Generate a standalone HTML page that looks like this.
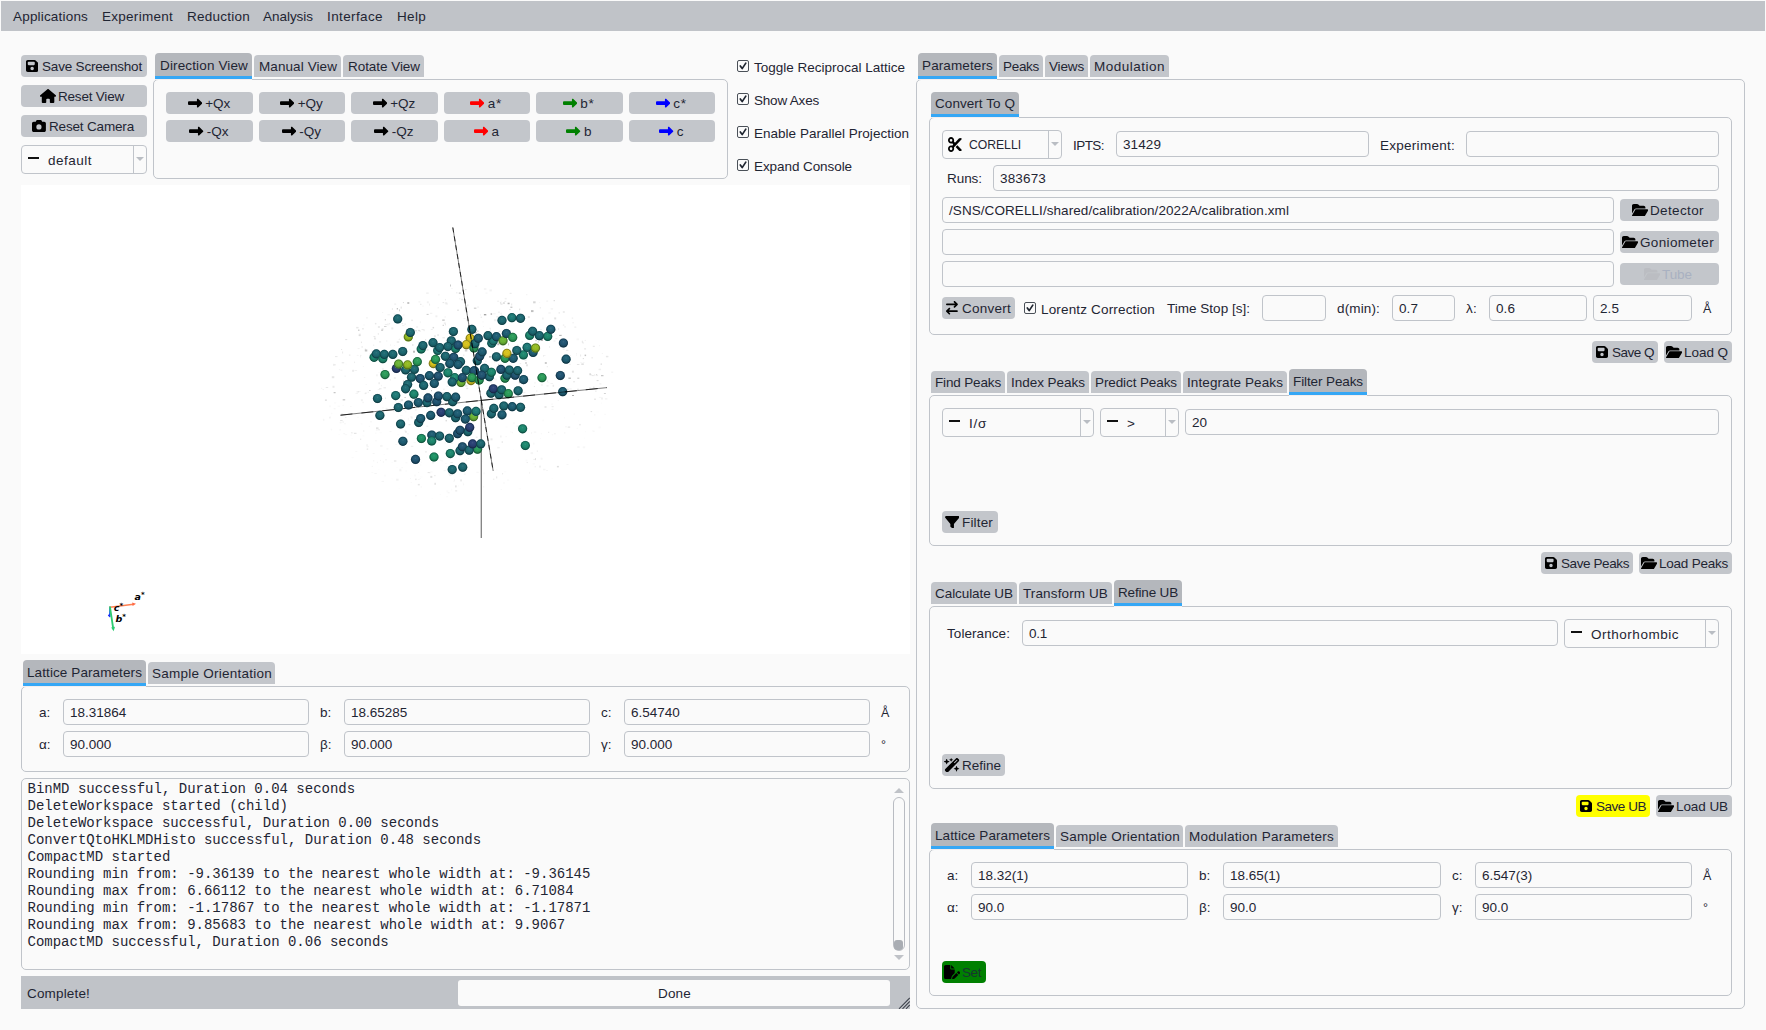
<!DOCTYPE html>
<html lang="en"><head><meta charset="utf-8"><title>Garnet</title>
<style>
html,body{margin:0;padding:0;}
body{width:1766px;height:1030px;background:#fafafa;position:relative;overflow:hidden;font-family:"Liberation Sans", sans-serif;font-size:13.5px;color:#1f2533;}
div,pre,svg.ic{position:absolute;box-sizing:content-box;}
.bar{background:#c0c3c8;}
.btn{background:#c3c6cb;border-radius:4px;}
.dbtn{box-sizing:border-box;padding-right:2px;display:flex;justify-content:center;align-items:center;white-space:nowrap;}
.dbtn svg{position:static;flex:none;}
.tab{background:#c3c6cb;border-radius:4px 4px 0 0;}
.tab.sel{background:#b4b7bc;box-shadow:inset 0 -3px 0 #35a7f5,0 1px 0 #f3eeee;}
.pane{border:1px solid #c0c4ca;border-radius:5px;background:#fafafa;}
.inp{border:1px solid #c0c4ca;border-radius:4px;background:#fafafa;}
.view{background:#fff;overflow:hidden;}
.prog{background:#fafafa;border-radius:3px;}
.t{white-space:nowrap;margin-top:1px;}
.sep{width:1px;background:#c0c4ca;}
.darr{width:0;height:0;border-left:4.4px solid transparent;border-right:4.4px solid transparent;border-top:4.4px solid #b9bdc3;}
.dash{width:11px;height:2px;background:#111;}
.cb{width:10px;height:10px;border:1px solid #4a5058;border-radius:2px;background:#fafafa;}
.cb svg{position:absolute;left:-1px;top:-1px;}
.con{margin:0;font-family:"Liberation Mono",monospace;font-size:14px;line-height:17px;color:#1f2533;}
.uarr{width:0;height:0;border-left:5px solid transparent;border-right:5px solid transparent;border-bottom:5px solid #bfc2c7;}
.darr2{width:0;height:0;border-left:5px solid transparent;border-right:5px solid transparent;border-top:5px solid #bfc2c7;}
.sbt{border:1px solid #b9bcc2;border-radius:6px;background:#fafafa;}
.sbh{width:9px;height:9.6px;border-radius:3px;background:#a9adb3;}
</style></head>
<body>
<div class="pane" style="left:153px;top:79px;width:573px;height:98px;"></div>
<div class="pane" style="left:21px;top:686px;width:887px;height:84px;"></div>
<div class="pane" style="left:21px;top:778px;width:887px;height:190px;"></div>
<div class="pane" style="left:916px;top:79px;width:827px;height:928px;"></div>
<div class="pane" style="left:929px;top:117px;width:801px;height:216px;"></div>
<div class="pane" style="left:929px;top:395px;width:801px;height:149px;"></div>
<div class="pane" style="left:929px;top:606px;width:801px;height:181px;"></div>
<div class="pane" style="left:929px;top:849px;width:801px;height:145px;"></div>
<div class="bar" style="left:1px;top:1px;width:1764px;height:30px;"></div>
<div class="t fit" style="left:13px;top:1px;height:30px;line-height:30px;letter-spacing:0.184px;">Applications</div>
<div class="t fit" style="left:102px;top:1px;height:30px;line-height:30px;letter-spacing:0.272px;">Experiment</div>
<div class="t fit" style="left:187px;top:1px;height:30px;line-height:30px;letter-spacing:0.245px;">Reduction</div>
<div class="t fit" style="left:263px;top:1px;height:30px;line-height:30px;letter-spacing:-0.035px;">Analysis</div>
<div class="t fit" style="left:327px;top:1px;height:30px;line-height:30px;letter-spacing:0.385px;">Interface</div>
<div class="t fit" style="left:397px;top:1px;height:30px;line-height:30px;letter-spacing:0.309px;">Help</div>
<div class="btn" style="left:21px;top:55px;width:126px;height:22px;"></div>
<svg class="ic" style="left:25.8px;top:60.0px;width:12.3px;height:12px" viewBox="0 32 448 448" preserveAspectRatio="none"><path fill="#000" d="M64 32C28.700 32 0 60.700 0 96V416c0 35.300 28.700 64 64 64H384c35.300 0 64-28.700 64-64V173.300c0-17-6.700-33.300-18.700-45.300L352 50.700C340 38.700 323.700 32 306.700 32H64zm0 96c0-17.700 14.300-32 32-32H288c17.700 0 32 14.300 32 32v64c0 17.700-14.300 32-32 32H96c-17.700 0-32-14.300-32-32V128zM224 288a64 64 0 1 1 0 128 64 64 0 1 1 0-128z"/></svg>
<div class="t fit" style="left:42px;top:55px;height:22px;line-height:22px;letter-spacing:-0.188px;">Save Screenshot</div>
<div class="btn" style="left:21px;top:85px;width:126px;height:22px;"></div>
<svg class="ic" style="left:39.8px;top:89.0px;width:16.1px;height:14px" viewBox="0 0 576 512" preserveAspectRatio="none"><path fill="#000" d="M575.800 255.500c0 18-15 32.100-32 32.100h-32l.7 160.200c0 2.700-.2 5.400-.5 8.100V472c0 22.100-17.900 40-40 40H456c-1.100 0-2.200 0-3.300-.1c-1.400.1-2.800.1-4.200.1H416 392c-22.100 0-40-17.900-40-40V448 384c0-17.700-14.300-32-32-32H256c-17.700 0-32 14.300-32 32v64 24c0 22.100-17.900 40-40 40H160 128.100c-1.500 0-3-.1-4.500-.2c-1.200.1-2.400.2-3.600.2H104c-22.100 0-40-17.900-40-40V360c0-.9 0-1.900.1-2.800V287.600H32c-18 0-32-14-32-32.100c0-9 3-17 10-24L266.400 8c7-7 15-8 22-8s15 2 21 7L564.800 231.500c8 7 12 15 11 24z"/></svg>
<div class="t fit" style="left:58px;top:85px;height:22px;line-height:22px;letter-spacing:-0.205px;">Reset View</div>
<div class="btn" style="left:21px;top:115px;width:126px;height:22px;"></div>
<svg class="ic" style="left:32px;top:119.95px;width:13.9px;height:12.1px" viewBox="0 32 512 448" preserveAspectRatio="none"><path fill="#000" d="M149.100 64.800L138.700 96H64C28.700 96 0 124.700 0 160V416c0 35.300 28.700 64 64 64H448c35.300 0 64-28.700 64-64V160c0-35.300-28.700-64-64-64H373.300L362.900 64.800C356.400 45.200 338.100 32 317.400 32H194.600c-20.700 0-39 13.200-45.500 32.800zM256 192a96 96 0 1 1 0 192 96 96 0 1 1 0-192z"/></svg>
<div class="t fit" style="left:49px;top:115px;height:22px;line-height:22px;letter-spacing:-0.171px;">Reset Camera</div>
<div class="inp" style="left:21px;top:145px;width:124px;height:27px;"></div>
<div class="sep" style="left:133px;top:146px;height:27px"></div>
<div class="darr" style="left:135.6px;top:156.8px"></div>
<div class="dash" style="left:28px;top:156.8px"></div>
<div class="t fit" style="left:48px;top:145px;height:29px;line-height:29px;letter-spacing:0.493px;">default</div>
<div class="tab sel" style="left:155px;top:53px;width:97px;height:26px"></div>
<div class="t fit" style="left:160px;top:53px;height:23px;line-height:23px;letter-spacing:0.140px;">Direction View</div>
<div class="tab" style="left:254px;top:55px;width:87px;height:22px"></div>
<div class="t fit" style="left:259px;top:55px;height:22px;line-height:22px;letter-spacing:0.087px;">Manual View</div>
<div class="tab" style="left:343px;top:55px;width:81px;height:22px"></div>
<div class="t fit" style="left:348px;top:55px;height:22px;line-height:22px;letter-spacing:-0.050px;">Rotate View</div>
<div class="btn dbtn" style="left:166px;top:92px;width:87px;height:22px"><svg viewBox="0 0 512 512" width="14.3" height="14.3" style="margin:0 0.85px"><path fill="#000" d="M334.5 414c8.800 3.800 19 2 26-4.600l144-136c4.800-4.500 7.500-10.800 7.500-17.400s-2.700-12.900-7.500-17.400l-144-136c-7-6.600-17.200-8.400-26-4.600s-14.500 12.500-14.500 22l0 72L32 192c-17.700 0-32 14.300-32 32l0 64c0 17.700 14.300 32 32 32l288 0 0 72c0 9.600 5.700 18.200 14.500 22z"/></svg><span class="fit" style="margin-left:2.5px;margin-top:1px;">+Qx</span></div>
<div class="btn dbtn" style="left:259px;top:92px;width:86px;height:22px"><svg viewBox="0 0 512 512" width="14.3" height="14.3" style="margin:0 0.85px"><path fill="#000" d="M334.5 414c8.800 3.800 19 2 26-4.600l144-136c4.800-4.500 7.500-10.800 7.500-17.400s-2.700-12.900-7.500-17.400l-144-136c-7-6.600-17.200-8.400-26-4.600s-14.500 12.500-14.500 22l0 72L32 192c-17.700 0-32 14.300-32 32l0 64c0 17.700 14.300 32 32 32l288 0 0 72c0 9.600 5.700 18.200 14.500 22z"/></svg><span class="fit" style="margin-left:2.5px;margin-top:1px;">+Qy</span></div>
<div class="btn dbtn" style="left:351px;top:92px;width:87px;height:22px"><svg viewBox="0 0 512 512" width="14.3" height="14.3" style="margin:0 0.85px"><path fill="#000" d="M334.5 414c8.800 3.800 19 2 26-4.600l144-136c4.800-4.500 7.500-10.800 7.500-17.400s-2.700-12.900-7.500-17.400l-144-136c-7-6.600-17.200-8.400-26-4.600s-14.500 12.500-14.500 22l0 72L32 192c-17.700 0-32 14.300-32 32l0 64c0 17.700 14.300 32 32 32l288 0 0 72c0 9.600 5.700 18.200 14.500 22z"/></svg><span class="fit" style="margin-left:2.5px;margin-top:1px;">+Qz</span></div>
<div class="btn dbtn" style="left:444px;top:92px;width:86px;height:22px"><svg viewBox="0 0 512 512" width="14.3" height="14.3" style="margin:0 0.85px"><path fill="#f00" d="M334.5 414c8.800 3.800 19 2 26-4.600l144-136c4.800-4.500 7.500-10.800 7.500-17.400s-2.700-12.900-7.500-17.400l-144-136c-7-6.600-17.200-8.400-26-4.600s-14.500 12.500-14.500 22l0 72L32 192c-17.700 0-32 14.300-32 32l0 64c0 17.700 14.300 32 32 32l288 0 0 72c0 9.600 5.700 18.200 14.500 22z"/></svg><span class="fit" style="margin-left:2.5px;margin-top:1px;letter-spacing:0.8px;margin-right:0.6px;">a*</span></div>
<div class="btn dbtn" style="left:536px;top:92px;width:87px;height:22px"><svg viewBox="0 0 512 512" width="14.3" height="14.3" style="margin:0 0.85px"><path fill="#008000" d="M334.5 414c8.800 3.800 19 2 26-4.600l144-136c4.800-4.500 7.500-10.800 7.500-17.400s-2.700-12.900-7.500-17.400l-144-136c-7-6.600-17.200-8.400-26-4.600s-14.500 12.500-14.500 22l0 72L32 192c-17.700 0-32 14.300-32 32l0 64c0 17.700 14.300 32 32 32l288 0 0 72c0 9.600 5.700 18.200 14.500 22z"/></svg><span class="fit" style="margin-left:2.5px;margin-top:1px;letter-spacing:0.8px;margin-right:0.6px;">b*</span></div>
<div class="btn dbtn" style="left:629px;top:92px;width:86px;height:22px"><svg viewBox="0 0 512 512" width="14.3" height="14.3" style="margin:0 0.85px"><path fill="#00f" d="M334.5 414c8.800 3.800 19 2 26-4.600l144-136c4.800-4.500 7.500-10.800 7.500-17.400s-2.700-12.900-7.500-17.400l-144-136c-7-6.600-17.200-8.400-26-4.600s-14.500 12.500-14.500 22l0 72L32 192c-17.700 0-32 14.300-32 32l0 64c0 17.700 14.300 32 32 32l288 0 0 72c0 9.600 5.700 18.200 14.500 22z"/></svg><span class="fit" style="margin-left:2.5px;margin-top:1px;letter-spacing:0.8px;margin-right:0.6px;">c*</span></div>
<div class="btn dbtn" style="left:166px;top:120px;width:87px;height:22px"><svg viewBox="0 0 512 512" width="14.3" height="14.3" style="margin:0 0.85px"><path fill="#000" d="M334.5 414c8.800 3.800 19 2 26-4.600l144-136c4.800-4.500 7.500-10.800 7.500-17.400s-2.700-12.900-7.500-17.400l-144-136c-7-6.600-17.200-8.400-26-4.600s-14.500 12.500-14.500 22l0 72L32 192c-17.700 0-32 14.300-32 32l0 64c0 17.700 14.300 32 32 32l288 0 0 72c0 9.600 5.700 18.200 14.500 22z"/></svg><span class="fit" style="margin-left:2.5px;margin-top:1px;">-Qx</span></div>
<div class="btn dbtn" style="left:259px;top:120px;width:86px;height:22px"><svg viewBox="0 0 512 512" width="14.3" height="14.3" style="margin:0 0.85px"><path fill="#000" d="M334.5 414c8.800 3.800 19 2 26-4.600l144-136c4.800-4.500 7.500-10.800 7.500-17.400s-2.700-12.900-7.500-17.400l-144-136c-7-6.600-17.200-8.400-26-4.600s-14.500 12.500-14.500 22l0 72L32 192c-17.700 0-32 14.300-32 32l0 64c0 17.700 14.300 32 32 32l288 0 0 72c0 9.600 5.700 18.200 14.500 22z"/></svg><span class="fit" style="margin-left:2.5px;margin-top:1px;">-Qy</span></div>
<div class="btn dbtn" style="left:351px;top:120px;width:87px;height:22px"><svg viewBox="0 0 512 512" width="14.3" height="14.3" style="margin:0 0.85px"><path fill="#000" d="M334.5 414c8.800 3.800 19 2 26-4.600l144-136c4.800-4.500 7.500-10.800 7.500-17.400s-2.700-12.900-7.500-17.400l-144-136c-7-6.600-17.200-8.400-26-4.600s-14.500 12.500-14.500 22l0 72L32 192c-17.700 0-32 14.300-32 32l0 64c0 17.700 14.300 32 32 32l288 0 0 72c0 9.600 5.700 18.200 14.500 22z"/></svg><span class="fit" style="margin-left:2.5px;margin-top:1px;">-Qz</span></div>
<div class="btn dbtn" style="left:444px;top:120px;width:86px;height:22px"><svg viewBox="0 0 512 512" width="14.3" height="14.3" style="margin:0 0.85px"><path fill="#f00" d="M334.5 414c8.800 3.800 19 2 26-4.600l144-136c4.800-4.500 7.500-10.800 7.500-17.400s-2.700-12.900-7.500-17.400l-144-136c-7-6.600-17.200-8.400-26-4.600s-14.500 12.500-14.500 22l0 72L32 192c-17.700 0-32 14.300-32 32l0 64c0 17.700 14.300 32 32 32l288 0 0 72c0 9.600 5.700 18.200 14.500 22z"/></svg><span class="fit" style="margin-left:2.5px;margin-top:1px;">a</span></div>
<div class="btn dbtn" style="left:536px;top:120px;width:87px;height:22px"><svg viewBox="0 0 512 512" width="14.3" height="14.3" style="margin:0 0.85px"><path fill="#008000" d="M334.5 414c8.800 3.800 19 2 26-4.600l144-136c4.800-4.500 7.500-10.800 7.500-17.400s-2.700-12.900-7.500-17.400l-144-136c-7-6.600-17.200-8.400-26-4.600s-14.500 12.500-14.500 22l0 72L32 192c-17.700 0-32 14.300-32 32l0 64c0 17.700 14.300 32 32 32l288 0 0 72c0 9.600 5.700 18.200 14.500 22z"/></svg><span class="fit" style="margin-left:2.5px;margin-top:1px;">b</span></div>
<div class="btn dbtn" style="left:629px;top:120px;width:86px;height:22px"><svg viewBox="0 0 512 512" width="14.3" height="14.3" style="margin:0 0.85px"><path fill="#00f" d="M334.5 414c8.800 3.800 19 2 26-4.600l144-136c4.800-4.500 7.500-10.800 7.500-17.400s-2.700-12.900-7.500-17.400l-144-136c-7-6.600-17.200-8.400-26-4.600s-14.500 12.500-14.500 22l0 72L32 192c-17.700 0-32 14.300-32 32l0 64c0 17.700 14.300 32 32 32l288 0 0 72c0 9.600 5.700 18.200 14.500 22z"/></svg><span class="fit" style="margin-left:2.5px;margin-top:1px;">c</span></div>
<div class="cb" style="left:737px;top:60px"><svg viewBox="0 0 12 12" width="12" height="12"><path d="M3.3 5.9 L5.2 8.6 L8.8 3.1" fill="none" stroke="#1f2530" stroke-width="1.7" stroke-linecap="round" stroke-linejoin="round"/></svg></div>
<div class="t fit" style="left:754px;top:56px;height:22px;line-height:22px;letter-spacing:0.006px;">Toggle Reciprocal Lattice</div>
<div class="cb" style="left:737px;top:93px"><svg viewBox="0 0 12 12" width="12" height="12"><path d="M3.3 5.9 L5.2 8.6 L8.8 3.1" fill="none" stroke="#1f2530" stroke-width="1.7" stroke-linecap="round" stroke-linejoin="round"/></svg></div>
<div class="t fit" style="left:754px;top:89px;height:22px;line-height:22px;letter-spacing:-0.200px;">Show Axes</div>
<div class="cb" style="left:737px;top:126px"><svg viewBox="0 0 12 12" width="12" height="12"><path d="M3.3 5.9 L5.2 8.6 L8.8 3.1" fill="none" stroke="#1f2530" stroke-width="1.7" stroke-linecap="round" stroke-linejoin="round"/></svg></div>
<div class="t fit" style="left:754px;top:122px;height:22px;line-height:22px;letter-spacing:0.016px;">Enable Parallel Projection</div>
<div class="cb" style="left:737px;top:159px"><svg viewBox="0 0 12 12" width="12" height="12"><path d="M3.3 5.9 L5.2 8.6 L8.8 3.1" fill="none" stroke="#1f2530" stroke-width="1.7" stroke-linecap="round" stroke-linejoin="round"/></svg></div>
<div class="t fit" style="left:754px;top:155px;height:22px;line-height:22px;letter-spacing:-0.077px;">Expand Console</div>
<div class="view" style="left:21px;top:185px;width:889px;height:469px;"><svg viewBox="21 185 889 469" width="889" height="469" style="position:absolute;left:0;top:0"><defs><radialGradient id="sh" cx="0.5" cy="0.36" r="0.7"><stop offset="0" stop-color="#fff" stop-opacity="0.10"/><stop offset="0.4" stop-color="#000" stop-opacity="0"/><stop offset="0.78" stop-color="#000" stop-opacity="0.22"/><stop offset="1" stop-color="#000" stop-opacity="0.5"/></radialGradient></defs><g><rect x="435.5" y="436.8" width="2" height="1" fill="#000" fill-opacity="0.02"/><rect x="426.8" y="392.7" width="1" height="2" fill="#000" fill-opacity="0.10"/><rect x="516.5" y="425.6" width="2" height="1" fill="#000" fill-opacity="0.07"/><rect x="521.4" y="340.8" width="1.5" height="2" fill="#000" fill-opacity="0.04"/><rect x="359.9" y="355.5" width="1" height="2" fill="#000" fill-opacity="0.05"/><rect x="421.6" y="329.1" width="2" height="1" fill="#000" fill-opacity="0.09"/><rect x="437.3" y="334.3" width="1.5" height="1.5" fill="#000" fill-opacity="0.11"/><rect x="539.9" y="437.9" width="1" height="1" fill="#000" fill-opacity="0.03"/><rect x="528.0" y="338.7" width="2" height="1.5" fill="#000" fill-opacity="0.04"/><rect x="455.1" y="485.4" width="1.5" height="2" fill="#000" fill-opacity="0.12"/><rect x="444.8" y="463.0" width="2" height="1" fill="#000" fill-opacity="0.02"/><rect x="498.2" y="363.9" width="1" height="1.5" fill="#000" fill-opacity="0.18"/><rect x="390.4" y="425.7" width="1" height="1" fill="#000" fill-opacity="0.02"/><rect x="376.0" y="427.3" width="2.5" height="2" fill="#000" fill-opacity="0.11"/><rect x="464.4" y="309.4" width="2.5" height="2" fill="#000" fill-opacity="0.06"/><rect x="548.2" y="431.8" width="1" height="1" fill="#000" fill-opacity="0.11"/><rect x="398.7" y="402.5" width="2" height="1.5" fill="#000" fill-opacity="0.02"/><rect x="461.2" y="298.8" width="2" height="1" fill="#000" fill-opacity="0.11"/><rect x="391.3" y="462.2" width="1.5" height="1" fill="#000" fill-opacity="0.02"/><rect x="420.1" y="428.7" width="2" height="1" fill="#000" fill-opacity="0.04"/><rect x="497.1" y="300.7" width="2" height="1" fill="#000" fill-opacity="0.07"/><rect x="450.0" y="284.5" width="1" height="2" fill="#000" fill-opacity="0.21"/><rect x="599.1" y="345.2" width="1" height="1" fill="#000" fill-opacity="0.05"/><rect x="503.9" y="471.3" width="2.5" height="1" fill="#000" fill-opacity="0.02"/><rect x="394.2" y="303.6" width="2" height="1" fill="#000" fill-opacity="0.08"/><rect x="584.2" y="437.7" width="1" height="1" fill="#000" fill-opacity="0.02"/><rect x="546.0" y="470.0" width="2" height="1" fill="#000" fill-opacity="0.03"/><rect x="594.5" y="398.5" width="1" height="1.5" fill="#000" fill-opacity="0.17"/><rect x="490.7" y="376.4" width="2" height="1" fill="#000" fill-opacity="0.06"/><rect x="556.9" y="465.9" width="2" height="1.5" fill="#000" fill-opacity="0.13"/><rect x="505.4" y="426.5" width="2" height="1" fill="#000" fill-opacity="0.02"/><rect x="540.6" y="457.7" width="2" height="2" fill="#000" fill-opacity="0.04"/><rect x="499.8" y="368.9" width="1" height="2" fill="#000" fill-opacity="0.03"/><rect x="499.3" y="376.1" width="2" height="2" fill="#000" fill-opacity="0.05"/><rect x="333.6" y="392.2" width="2" height="1" fill="#000" fill-opacity="0.28"/><rect x="418.5" y="329.9" width="1" height="1" fill="#000" fill-opacity="0.24"/><rect x="413.5" y="442.2" width="2.5" height="1" fill="#000" fill-opacity="0.03"/><rect x="599.4" y="383.1" width="2" height="1.5" fill="#000" fill-opacity="0.05"/><rect x="417.8" y="479.0" width="2" height="1" fill="#000" fill-opacity="0.03"/><rect x="431.7" y="497.8" width="1" height="1" fill="#000" fill-opacity="0.02"/><rect x="525.8" y="354.2" width="2.5" height="1" fill="#000" fill-opacity="0.07"/><rect x="358.2" y="391.0" width="2.5" height="1" fill="#000" fill-opacity="0.04"/><rect x="576.0" y="353.0" width="1" height="1" fill="#000" fill-opacity="0.04"/><rect x="601.5" y="397.5" width="1" height="2" fill="#000" fill-opacity="0.11"/><rect x="550.5" y="383.0" width="2.5" height="1" fill="#000" fill-opacity="0.05"/><rect x="351.2" y="432.2" width="1.5" height="1" fill="#000" fill-opacity="0.04"/><rect x="389.8" y="379.0" width="1" height="1.5" fill="#000" fill-opacity="0.07"/><rect x="572.6" y="322.3" width="1" height="1" fill="#000" fill-opacity="0.10"/><rect x="465.9" y="343.6" width="1" height="1" fill="#000" fill-opacity="0.09"/><rect x="468.5" y="446.1" width="2.5" height="1" fill="#000" fill-opacity="0.04"/><rect x="398.5" y="488.1" width="1.5" height="1" fill="#000" fill-opacity="0.01"/><rect x="386.4" y="448.4" width="2" height="1" fill="#000" fill-opacity="0.04"/><rect x="535.0" y="458.1" width="1" height="2" fill="#000" fill-opacity="0.12"/><rect x="543.0" y="468.8" width="2.5" height="1.5" fill="#000" fill-opacity="0.04"/><rect x="444.0" y="363.7" width="2.5" height="1.5" fill="#000" fill-opacity="0.09"/><rect x="530.6" y="452.1" width="2.5" height="2" fill="#000" fill-opacity="0.04"/><rect x="581.3" y="363.6" width="2.5" height="1" fill="#000" fill-opacity="0.20"/><rect x="428.6" y="403.6" width="1" height="1.5" fill="#000" fill-opacity="0.03"/><rect x="592.0" y="430.1" width="2.5" height="1.5" fill="#000" fill-opacity="0.02"/><rect x="455.2" y="490.1" width="2" height="1.5" fill="#000" fill-opacity="0.07"/><rect x="543.0" y="355.8" width="1" height="1" fill="#000" fill-opacity="0.06"/><rect x="393.7" y="319.2" width="2" height="1" fill="#000" fill-opacity="0.11"/><rect x="345.0" y="417.0" width="1.5" height="1" fill="#000" fill-opacity="0.06"/><rect x="342.4" y="421.3" width="1.5" height="1.5" fill="#000" fill-opacity="0.05"/><rect x="496.2" y="476.4" width="1" height="2" fill="#000" fill-opacity="0.10"/><rect x="560.2" y="334.5" width="2" height="1.5" fill="#000" fill-opacity="0.03"/><rect x="362.4" y="401.7" width="1.5" height="1.5" fill="#000" fill-opacity="0.04"/><rect x="593.4" y="386.7" width="1" height="1" fill="#000" fill-opacity="0.19"/><rect x="402.1" y="447.0" width="1.5" height="1.5" fill="#000" fill-opacity="0.04"/><rect x="455.5" y="420.6" width="1" height="1" fill="#000" fill-opacity="0.09"/><rect x="415.4" y="478.6" width="1" height="1.5" fill="#000" fill-opacity="0.13"/><rect x="352.1" y="369.8" width="2" height="2" fill="#000" fill-opacity="0.08"/><rect x="457.8" y="422.5" width="2" height="1.5" fill="#000" fill-opacity="0.02"/><rect x="456.0" y="292.0" width="1.5" height="1.5" fill="#000" fill-opacity="0.06"/><rect x="501.7" y="441.3" width="1" height="1.5" fill="#000" fill-opacity="0.13"/><rect x="405.0" y="410.6" width="1.5" height="2" fill="#000" fill-opacity="0.02"/><rect x="463.8" y="473.4" width="2" height="1.5" fill="#000" fill-opacity="0.03"/><rect x="402.4" y="443.5" width="1.5" height="1" fill="#000" fill-opacity="0.03"/><rect x="504.7" y="297.9" width="2" height="1.5" fill="#000" fill-opacity="0.06"/><rect x="417.8" y="483.9" width="2" height="1.5" fill="#000" fill-opacity="0.10"/><rect x="592.9" y="431.0" width="2" height="1" fill="#000" fill-opacity="0.02"/><rect x="551.4" y="477.7" width="2" height="1" fill="#000" fill-opacity="0.01"/><rect x="485.8" y="331.2" width="1.5" height="1" fill="#000" fill-opacity="0.07"/><rect x="350.3" y="434.6" width="2" height="1" fill="#000" fill-opacity="0.02"/><rect x="446.5" y="385.8" width="1.5" height="1" fill="#000" fill-opacity="0.05"/><rect x="342.7" y="399.0" width="2.5" height="1.5" fill="#000" fill-opacity="0.18"/><rect x="500.6" y="300.7" width="1" height="1" fill="#000" fill-opacity="0.05"/><rect x="385.6" y="407.8" width="2" height="1.5" fill="#000" fill-opacity="0.05"/><rect x="333.6" y="408.3" width="2" height="1" fill="#000" fill-opacity="0.05"/><rect x="496.1" y="417.2" width="1.5" height="1" fill="#000" fill-opacity="0.13"/><rect x="436.0" y="438.7" width="1" height="1" fill="#000" fill-opacity="0.03"/><rect x="402.0" y="443.3" width="1.5" height="1" fill="#000" fill-opacity="0.05"/><rect x="566.5" y="464.0" width="2" height="1" fill="#000" fill-opacity="0.03"/><rect x="371.3" y="472.0" width="2" height="1" fill="#000" fill-opacity="0.02"/><rect x="393.9" y="344.9" width="1" height="1" fill="#000" fill-opacity="0.04"/><rect x="387.6" y="358.0" width="1" height="1" fill="#000" fill-opacity="0.09"/><rect x="543.0" y="355.0" width="2.5" height="1" fill="#000" fill-opacity="0.05"/><rect x="331.0" y="412.7" width="1.5" height="1.5" fill="#000" fill-opacity="0.02"/><rect x="447.0" y="392.0" width="2.5" height="1" fill="#000" fill-opacity="0.06"/><rect x="426.2" y="456.4" width="1" height="1.5" fill="#000" fill-opacity="0.02"/><rect x="497.1" y="400.7" width="1" height="1" fill="#000" fill-opacity="0.02"/><rect x="362.1" y="435.4" width="2.5" height="1" fill="#000" fill-opacity="0.02"/><rect x="450.5" y="456.4" width="2" height="1" fill="#000" fill-opacity="0.02"/><rect x="439.7" y="494.1" width="1.5" height="1" fill="#000" fill-opacity="0.02"/><rect x="510.4" y="306.7" width="2" height="1" fill="#000" fill-opacity="0.29"/><rect x="551.6" y="406.2" width="2" height="1" fill="#000" fill-opacity="0.09"/><rect x="534.4" y="337.1" width="1" height="1" fill="#000" fill-opacity="0.09"/><rect x="443.1" y="416.8" width="1.5" height="1" fill="#000" fill-opacity="0.04"/><rect x="438.5" y="441.3" width="1" height="1.5" fill="#000" fill-opacity="0.03"/><rect x="354.6" y="370.0" width="2.5" height="1" fill="#000" fill-opacity="0.05"/><rect x="415.2" y="494.9" width="1.5" height="1.5" fill="#000" fill-opacity="0.04"/><rect x="562.3" y="391.2" width="1" height="1" fill="#000" fill-opacity="0.04"/><rect x="504.5" y="415.6" width="1" height="1" fill="#000" fill-opacity="0.02"/><rect x="493.9" y="319.2" width="2.5" height="2" fill="#000" fill-opacity="0.06"/><rect x="505.6" y="436.2" width="1" height="1" fill="#000" fill-opacity="0.05"/><rect x="577.3" y="377.7" width="2" height="1" fill="#000" fill-opacity="0.24"/><rect x="497.3" y="343.2" width="2" height="2" fill="#000" fill-opacity="0.27"/><rect x="354.1" y="361.6" width="1" height="1.5" fill="#000" fill-opacity="0.07"/><rect x="400.8" y="349.2" width="2" height="1.5" fill="#000" fill-opacity="0.07"/><rect x="434.2" y="399.8" width="1" height="1.5" fill="#000" fill-opacity="0.09"/><rect x="395.6" y="408.9" width="1" height="1" fill="#000" fill-opacity="0.02"/><rect x="368.8" y="425.8" width="1" height="1" fill="#000" fill-opacity="0.03"/><rect x="553.7" y="300.2" width="1" height="1" fill="#000" fill-opacity="0.22"/><rect x="600.7" y="363.6" width="1" height="1" fill="#000" fill-opacity="0.24"/><rect x="459.8" y="455.5" width="2" height="1" fill="#000" fill-opacity="0.05"/><rect x="350.1" y="405.9" width="1.5" height="1" fill="#000" fill-opacity="0.03"/><rect x="409.0" y="348.8" width="1.5" height="1" fill="#000" fill-opacity="0.03"/><rect x="550.6" y="308.4" width="2.5" height="1" fill="#000" fill-opacity="0.07"/><rect x="542.1" y="317.5" width="1.5" height="2" fill="#000" fill-opacity="0.06"/><rect x="383.5" y="387.3" width="2.5" height="1" fill="#000" fill-opacity="0.09"/><rect x="381.9" y="367.9" width="2" height="2" fill="#000" fill-opacity="0.04"/><rect x="378.4" y="469.2" width="1" height="1" fill="#000" fill-opacity="0.02"/><rect x="539.5" y="465.6" width="1" height="2" fill="#000" fill-opacity="0.11"/><rect x="360.4" y="354.9" width="1" height="1" fill="#000" fill-opacity="0.07"/><rect x="404.5" y="429.6" width="1" height="2" fill="#000" fill-opacity="0.05"/><rect x="509.9" y="431.4" width="2" height="1" fill="#000" fill-opacity="0.02"/><rect x="365.9" y="317.4" width="2" height="1" fill="#000" fill-opacity="0.06"/><rect x="509.1" y="368.5" width="1" height="1" fill="#000" fill-opacity="0.03"/><rect x="399.3" y="470.4" width="2.5" height="1" fill="#000" fill-opacity="0.03"/><rect x="344.8" y="434.2" width="2.5" height="1" fill="#000" fill-opacity="0.03"/><rect x="526.0" y="364.3" width="2" height="2" fill="#000" fill-opacity="0.10"/><rect x="418.4" y="301.4" width="2" height="1" fill="#000" fill-opacity="0.06"/><rect x="369.2" y="353.5" width="1" height="1" fill="#000" fill-opacity="0.04"/><rect x="589.5" y="374.4" width="2.5" height="1" fill="#000" fill-opacity="0.09"/><rect x="567.7" y="426.6" width="2.5" height="1" fill="#000" fill-opacity="0.12"/><rect x="442.7" y="324.8" width="1" height="1" fill="#000" fill-opacity="0.29"/><rect x="467.3" y="347.7" width="2" height="1" fill="#000" fill-opacity="0.09"/><rect x="412.0" y="344.5" width="1.5" height="1" fill="#000" fill-opacity="0.15"/><rect x="475.0" y="285.7" width="2" height="1" fill="#000" fill-opacity="0.03"/><rect x="379.4" y="432.3" width="2.5" height="1" fill="#000" fill-opacity="0.02"/><rect x="502.0" y="358.0" width="1" height="2" fill="#000" fill-opacity="0.09"/><rect x="478.5" y="390.0" width="1" height="1.5" fill="#000" fill-opacity="0.11"/><rect x="355.5" y="393.0" width="2.5" height="1" fill="#000" fill-opacity="0.04"/><rect x="433.1" y="359.5" width="1" height="1" fill="#000" fill-opacity="0.06"/><rect x="364.5" y="461.5" width="1" height="1" fill="#000" fill-opacity="0.02"/><rect x="549.1" y="346.2" width="1" height="1.5" fill="#000" fill-opacity="0.08"/><rect x="426.6" y="313.9" width="2" height="1" fill="#000" fill-opacity="0.21"/><rect x="376.2" y="374.3" width="1.5" height="2" fill="#000" fill-opacity="0.06"/><rect x="386.9" y="323.4" width="2.5" height="2" fill="#000" fill-opacity="0.04"/><rect x="465.6" y="459.5" width="1.5" height="1" fill="#000" fill-opacity="0.05"/><rect x="533.9" y="386.0" width="1" height="1" fill="#000" fill-opacity="0.09"/><rect x="397.2" y="415.6" width="1" height="1.5" fill="#000" fill-opacity="0.01"/><rect x="529.6" y="337.5" width="1.5" height="1.5" fill="#000" fill-opacity="0.05"/><rect x="465.0" y="384.7" width="2.5" height="2" fill="#000" fill-opacity="0.08"/><rect x="531.0" y="310.1" width="2.5" height="2" fill="#000" fill-opacity="0.25"/><rect x="399.2" y="338.5" width="1" height="1.5" fill="#000" fill-opacity="0.06"/><rect x="452.3" y="340.7" width="1" height="2" fill="#000" fill-opacity="0.22"/><rect x="396.8" y="308.0" width="1" height="1.5" fill="#000" fill-opacity="0.29"/><rect x="531.1" y="431.9" width="1" height="2" fill="#000" fill-opacity="0.04"/><rect x="392.9" y="410.1" width="1.5" height="2" fill="#000" fill-opacity="0.04"/><rect x="331.2" y="428.9" width="1" height="2" fill="#000" fill-opacity="0.02"/><rect x="454.1" y="465.3" width="2" height="1" fill="#000" fill-opacity="0.02"/><rect x="441.2" y="460.1" width="2" height="1.5" fill="#000" fill-opacity="0.02"/><rect x="485.5" y="292.6" width="2" height="1" fill="#000" fill-opacity="0.04"/><rect x="400.5" y="306.6" width="1.5" height="2" fill="#000" fill-opacity="0.09"/><rect x="340.1" y="420.1" width="2.5" height="1" fill="#000" fill-opacity="0.11"/><rect x="337.5" y="405.7" width="2.5" height="1" fill="#000" fill-opacity="0.03"/><rect x="429.5" y="364.7" width="1.5" height="1.5" fill="#000" fill-opacity="0.10"/><rect x="576.5" y="338.3" width="2.5" height="2" fill="#000" fill-opacity="0.03"/><rect x="580.5" y="362.1" width="1" height="1" fill="#000" fill-opacity="0.07"/><rect x="479.5" y="338.3" width="2" height="2" fill="#000" fill-opacity="0.15"/><rect x="555.4" y="338.2" width="2" height="1" fill="#000" fill-opacity="0.09"/><rect x="338.6" y="434.2" width="1" height="1" fill="#000" fill-opacity="0.03"/><rect x="329.5" y="405.3" width="1" height="2" fill="#000" fill-opacity="0.04"/><rect x="371.9" y="411.8" width="1" height="1" fill="#000" fill-opacity="0.01"/><rect x="374.4" y="336.7" width="1" height="2" fill="#000" fill-opacity="0.09"/><rect x="416.7" y="332.2" width="1" height="1" fill="#000" fill-opacity="0.06"/><rect x="340.4" y="369.7" width="2" height="1" fill="#000" fill-opacity="0.05"/><rect x="322.5" y="389.1" width="1.5" height="1" fill="#000" fill-opacity="0.05"/><rect x="364.8" y="349.5" width="2.5" height="2" fill="#000" fill-opacity="0.23"/><rect x="551.5" y="408.8" width="2" height="1" fill="#000" fill-opacity="0.05"/><rect x="373.4" y="336.0" width="2" height="1" fill="#000" fill-opacity="0.08"/><rect x="344.5" y="422.9" width="1" height="1.5" fill="#000" fill-opacity="0.05"/><rect x="415.1" y="330.3" width="2" height="1" fill="#000" fill-opacity="0.17"/><rect x="491.6" y="394.1" width="2" height="2" fill="#000" fill-opacity="0.10"/><rect x="479.9" y="314.4" width="1" height="1" fill="#000" fill-opacity="0.08"/><rect x="589.0" y="387.5" width="2" height="1" fill="#000" fill-opacity="0.07"/><rect x="559.1" y="334.9" width="2.5" height="1" fill="#000" fill-opacity="0.28"/><rect x="475.7" y="436.7" width="2" height="1" fill="#000" fill-opacity="0.09"/><rect x="467.0" y="304.3" width="1.5" height="2" fill="#000" fill-opacity="0.07"/><rect x="545.4" y="362.5" width="1" height="1" fill="#000" fill-opacity="0.08"/><rect x="485.4" y="360.6" width="1" height="1.5" fill="#000" fill-opacity="0.06"/><rect x="582.8" y="358.1" width="1" height="1" fill="#000" fill-opacity="0.17"/><rect x="500.4" y="312.7" width="1.5" height="2" fill="#000" fill-opacity="0.05"/><rect x="381.1" y="329.7" width="2" height="1" fill="#000" fill-opacity="0.24"/><rect x="431.8" y="461.9" width="2.5" height="1.5" fill="#000" fill-opacity="0.05"/><rect x="498.6" y="330.8" width="2" height="1" fill="#000" fill-opacity="0.10"/><rect x="499.2" y="366.5" width="2" height="1" fill="#000" fill-opacity="0.10"/><rect x="511.2" y="303.5" width="1" height="2" fill="#000" fill-opacity="0.09"/><rect x="506.8" y="479.4" width="2.5" height="1.5" fill="#000" fill-opacity="0.02"/><rect x="463.1" y="483.4" width="1" height="2" fill="#000" fill-opacity="0.04"/><rect x="483.2" y="472.3" width="2" height="2" fill="#000" fill-opacity="0.02"/><rect x="490.5" y="438.3" width="2" height="2" fill="#000" fill-opacity="0.08"/><rect x="562.6" y="348.7" width="2" height="1" fill="#000" fill-opacity="0.08"/><rect x="405.4" y="462.0" width="2" height="1.5" fill="#000" fill-opacity="0.02"/><rect x="544.8" y="362.0" width="2" height="2" fill="#000" fill-opacity="0.18"/><rect x="333.3" y="363.8" width="1" height="2" fill="#000" fill-opacity="0.10"/><rect x="450.4" y="355.7" width="1" height="2" fill="#000" fill-opacity="0.07"/><rect x="467.9" y="458.0" width="1" height="1" fill="#000" fill-opacity="0.04"/><rect x="382.2" y="312.0" width="1" height="1" fill="#000" fill-opacity="0.05"/><rect x="361.4" y="346.2" width="1.5" height="1.5" fill="#000" fill-opacity="0.07"/><rect x="457.6" y="339.9" width="1" height="1" fill="#000" fill-opacity="0.28"/><rect x="514.2" y="359.5" width="2" height="1" fill="#000" fill-opacity="0.07"/><rect x="391.6" y="478.4" width="1" height="1" fill="#000" fill-opacity="0.02"/><rect x="444.4" y="316.2" width="1.5" height="1.5" fill="#000" fill-opacity="0.04"/><rect x="447.6" y="492.3" width="2" height="1" fill="#000" fill-opacity="0.05"/><rect x="578.1" y="458.8" width="1" height="2" fill="#000" fill-opacity="0.02"/><rect x="456.3" y="455.1" width="1" height="1" fill="#000" fill-opacity="0.02"/><rect x="501.6" y="367.6" width="2.5" height="1" fill="#000" fill-opacity="0.07"/><rect x="365.5" y="383.9" width="1.5" height="1" fill="#000" fill-opacity="0.03"/><rect x="397.0" y="434.3" width="2" height="1" fill="#000" fill-opacity="0.02"/><rect x="496.4" y="469.3" width="1" height="1" fill="#000" fill-opacity="0.04"/><rect x="366.7" y="448.6" width="1.5" height="1" fill="#000" fill-opacity="0.13"/><rect x="442.1" y="392.0" width="2.5" height="1" fill="#000" fill-opacity="0.08"/><rect x="502.5" y="384.3" width="1" height="1" fill="#000" fill-opacity="0.07"/><rect x="404.1" y="384.6" width="1.5" height="1.5" fill="#000" fill-opacity="0.10"/><rect x="450.6" y="431.4" width="1" height="2" fill="#000" fill-opacity="0.02"/><rect x="341.7" y="362.3" width="2.5" height="1" fill="#000" fill-opacity="0.10"/><rect x="398.1" y="338.9" width="1.5" height="1" fill="#000" fill-opacity="0.03"/><rect x="407.8" y="417.8" width="1" height="2" fill="#000" fill-opacity="0.03"/><rect x="490.2" y="380.7" width="2" height="2" fill="#000" fill-opacity="0.06"/><rect x="584.6" y="354.6" width="1.5" height="1.5" fill="#000" fill-opacity="0.23"/><rect x="552.6" y="384.8" width="1.5" height="2" fill="#000" fill-opacity="0.08"/><rect x="384.5" y="474.7" width="1" height="2" fill="#000" fill-opacity="0.03"/><rect x="577.5" y="388.8" width="1" height="1" fill="#000" fill-opacity="0.24"/><rect x="564.5" y="340.9" width="1" height="2" fill="#000" fill-opacity="0.04"/><rect x="495.6" y="419.0" width="1" height="1.5" fill="#000" fill-opacity="0.05"/><rect x="370.0" y="421.3" width="2" height="1" fill="#000" fill-opacity="0.04"/><rect x="456.4" y="329.5" width="1" height="1.5" fill="#000" fill-opacity="0.09"/><rect x="355.2" y="414.5" width="1.5" height="1" fill="#000" fill-opacity="0.02"/><rect x="369.1" y="390.0" width="1.5" height="1" fill="#000" fill-opacity="0.18"/><rect x="363.9" y="377.0" width="1.5" height="1" fill="#000" fill-opacity="0.04"/><rect x="350.9" y="432.5" width="2.5" height="1" fill="#000" fill-opacity="0.04"/><rect x="511.8" y="431.8" width="1" height="1.5" fill="#000" fill-opacity="0.04"/><rect x="381.6" y="328.1" width="2" height="2" fill="#000" fill-opacity="0.07"/><rect x="571.9" y="370.7" width="2" height="2" fill="#000" fill-opacity="0.10"/><rect x="433.9" y="335.2" width="2" height="2" fill="#000" fill-opacity="0.08"/><rect x="595.1" y="390.7" width="1.5" height="1" fill="#000" fill-opacity="0.09"/><rect x="378.3" y="429.3" width="1.5" height="1" fill="#000" fill-opacity="0.11"/><rect x="476.4" y="458.1" width="1" height="1" fill="#000" fill-opacity="0.05"/><rect x="430.3" y="475.9" width="2" height="2" fill="#000" fill-opacity="0.12"/><rect x="375.8" y="429.9" width="2" height="1" fill="#000" fill-opacity="0.03"/><rect x="540.8" y="432.9" width="1" height="1.5" fill="#000" fill-opacity="0.03"/><rect x="363.5" y="324.5" width="1" height="1" fill="#000" fill-opacity="0.06"/><rect x="381.5" y="480.9" width="2.5" height="1" fill="#000" fill-opacity="0.04"/><rect x="500.7" y="488.9" width="1" height="1" fill="#000" fill-opacity="0.04"/><rect x="445.4" y="302.7" width="2.5" height="2" fill="#000" fill-opacity="0.05"/><rect x="527.8" y="316.1" width="2" height="2" fill="#000" fill-opacity="0.10"/><rect x="553.5" y="340.5" width="2" height="1" fill="#000" fill-opacity="0.07"/><rect x="438.1" y="394.9" width="2" height="1.5" fill="#000" fill-opacity="0.09"/><rect x="489.1" y="395.4" width="1.5" height="1" fill="#000" fill-opacity="0.05"/><rect x="435.6" y="412.5" width="1" height="1.5" fill="#000" fill-opacity="0.02"/><rect x="533.5" y="333.0" width="2" height="1" fill="#000" fill-opacity="0.06"/><rect x="448.5" y="341.5" width="2" height="1" fill="#000" fill-opacity="0.05"/><rect x="407.8" y="376.9" width="2" height="1" fill="#000" fill-opacity="0.21"/><rect x="559.2" y="347.0" width="1.5" height="1" fill="#000" fill-opacity="0.05"/><rect x="338.9" y="369.1" width="1" height="1" fill="#000" fill-opacity="0.05"/><rect x="366.1" y="444.2" width="2" height="2" fill="#000" fill-opacity="0.04"/><rect x="407.3" y="302.0" width="2" height="2" fill="#000" fill-opacity="0.23"/><rect x="380.1" y="444.9" width="2.5" height="2" fill="#000" fill-opacity="0.04"/><rect x="459.4" y="298.3" width="1" height="1" fill="#000" fill-opacity="0.09"/><rect x="422.5" y="305.6" width="1" height="1" fill="#000" fill-opacity="0.06"/><rect x="381.0" y="396.3" width="1" height="1" fill="#000" fill-opacity="0.09"/><rect x="450.4" y="462.0" width="2.5" height="1" fill="#000" fill-opacity="0.08"/><rect x="376.9" y="461.7" width="1" height="1.5" fill="#000" fill-opacity="0.04"/><rect x="396.0" y="466.7" width="2" height="1" fill="#000" fill-opacity="0.01"/><rect x="551.1" y="403.4" width="2" height="1.5" fill="#000" fill-opacity="0.02"/><rect x="354.0" y="432.8" width="2.5" height="1" fill="#000" fill-opacity="0.13"/><rect x="364.8" y="348.6" width="1" height="1" fill="#000" fill-opacity="0.10"/><rect x="464.8" y="349.5" width="2.5" height="2" fill="#000" fill-opacity="0.18"/><rect x="577.2" y="446.3" width="2.5" height="1.5" fill="#000" fill-opacity="0.04"/><rect x="502.1" y="473.3" width="1" height="1" fill="#000" fill-opacity="0.12"/><rect x="402.9" y="379.9" width="1" height="2" fill="#000" fill-opacity="0.11"/><rect x="419.8" y="321.2" width="1" height="2" fill="#000" fill-opacity="0.04"/><rect x="391.3" y="327.4" width="2" height="2" fill="#000" fill-opacity="0.08"/><rect x="595.6" y="375.1" width="2.5" height="1" fill="#000" fill-opacity="0.07"/><rect x="528.9" y="379.0" width="1.5" height="1" fill="#000" fill-opacity="0.03"/><rect x="322.9" y="418.8" width="1.5" height="2" fill="#000" fill-opacity="0.04"/><rect x="569.2" y="363.9" width="1.5" height="1" fill="#000" fill-opacity="0.08"/><rect x="575.9" y="354.5" width="1" height="1" fill="#000" fill-opacity="0.06"/><rect x="527.8" y="444.8" width="2.5" height="1" fill="#000" fill-opacity="0.04"/><rect x="419.5" y="478.0" width="1.5" height="1" fill="#000" fill-opacity="0.02"/><rect x="581.8" y="340.7" width="1" height="2" fill="#000" fill-opacity="0.10"/><rect x="566.7" y="388.6" width="2" height="1.5" fill="#000" fill-opacity="0.11"/><rect x="373.2" y="344.5" width="1" height="1.5" fill="#000" fill-opacity="0.06"/><rect x="595.9" y="374.0" width="1.5" height="1" fill="#000" fill-opacity="0.08"/><rect x="521.1" y="320.6" width="1" height="2" fill="#000" fill-opacity="0.10"/><rect x="487.5" y="396.8" width="2" height="1" fill="#000" fill-opacity="0.09"/><rect x="411.1" y="319.6" width="2" height="1.5" fill="#000" fill-opacity="0.07"/><rect x="415.3" y="360.8" width="1" height="1" fill="#000" fill-opacity="0.06"/><rect x="402.0" y="325.1" width="2.5" height="1" fill="#000" fill-opacity="0.06"/><rect x="493.1" y="378.4" width="2" height="1" fill="#000" fill-opacity="0.08"/><rect x="334.0" y="364.0" width="2" height="1.5" fill="#000" fill-opacity="0.05"/><rect x="539.5" y="375.9" width="1.5" height="1" fill="#000" fill-opacity="0.08"/><rect x="442.4" y="337.3" width="2.5" height="1" fill="#000" fill-opacity="0.10"/><rect x="342.1" y="351.5" width="1" height="2" fill="#000" fill-opacity="0.09"/><rect x="473.4" y="346.9" width="1" height="1.5" fill="#000" fill-opacity="0.20"/><rect x="473.7" y="361.2" width="1" height="2" fill="#000" fill-opacity="0.21"/><rect x="513.5" y="422.1" width="1" height="2" fill="#000" fill-opacity="0.04"/><rect x="410.8" y="445.8" width="2.5" height="1" fill="#000" fill-opacity="0.07"/><rect x="382.8" y="461.0" width="1" height="2" fill="#000" fill-opacity="0.03"/><rect x="418.2" y="471.9" width="1" height="1" fill="#000" fill-opacity="0.04"/><rect x="601.2" y="402.6" width="1" height="1" fill="#000" fill-opacity="0.03"/><rect x="434.4" y="482.8" width="1.5" height="2" fill="#000" fill-opacity="0.12"/><rect x="463.5" y="469.7" width="2" height="2" fill="#000" fill-opacity="0.01"/><rect x="489.0" y="356.1" width="2" height="1.5" fill="#000" fill-opacity="0.29"/><rect x="430.8" y="328.9" width="2" height="1" fill="#000" fill-opacity="0.07"/><rect x="440.9" y="435.1" width="1.5" height="1.5" fill="#000" fill-opacity="0.03"/><rect x="546.8" y="366.2" width="1" height="1" fill="#000" fill-opacity="0.10"/><rect x="374.1" y="338.4" width="2" height="1" fill="#000" fill-opacity="0.11"/><rect x="393.9" y="460.5" width="2.5" height="1" fill="#000" fill-opacity="0.13"/><rect x="500.1" y="302.7" width="1" height="1" fill="#000" fill-opacity="0.09"/><rect x="457.0" y="309.5" width="2" height="1.5" fill="#000" fill-opacity="0.09"/><rect x="402.9" y="302.1" width="1" height="1" fill="#000" fill-opacity="0.16"/><rect x="483.9" y="288.5" width="2.5" height="1" fill="#000" fill-opacity="0.08"/><rect x="391.9" y="308.0" width="1" height="2" fill="#000" fill-opacity="0.08"/><rect x="560.2" y="379.6" width="1" height="1.5" fill="#000" fill-opacity="0.04"/><rect x="555.5" y="334.3" width="1" height="1" fill="#000" fill-opacity="0.06"/><rect x="450.9" y="288.0" width="2" height="1" fill="#000" fill-opacity="0.03"/><rect x="453.3" y="480.8" width="1" height="1" fill="#000" fill-opacity="0.04"/><rect x="554.2" y="317.4" width="2" height="2" fill="#000" fill-opacity="0.11"/><rect x="487.2" y="377.6" width="1.5" height="1" fill="#000" fill-opacity="0.09"/><rect x="502.5" y="347.3" width="2" height="1" fill="#000" fill-opacity="0.06"/><rect x="399.3" y="468.8" width="2" height="2" fill="#000" fill-opacity="0.04"/><rect x="460.3" y="479.4" width="1.5" height="2" fill="#000" fill-opacity="0.10"/><rect x="448.1" y="472.7" width="1" height="2" fill="#000" fill-opacity="0.04"/><rect x="482.5" y="321.4" width="1" height="1" fill="#000" fill-opacity="0.04"/><rect x="393.8" y="377.5" width="2" height="1" fill="#000" fill-opacity="0.10"/><rect x="558.5" y="312.4" width="1.5" height="1" fill="#000" fill-opacity="0.10"/><rect x="473.9" y="367.2" width="2.5" height="1.5" fill="#000" fill-opacity="0.06"/><rect x="481.6" y="460.8" width="1" height="1" fill="#000" fill-opacity="0.02"/><rect x="395.1" y="423.5" width="2.5" height="1" fill="#000" fill-opacity="0.05"/><rect x="492.9" y="478.7" width="1.5" height="1" fill="#000" fill-opacity="0.08"/><rect x="415.2" y="462.1" width="2.5" height="2" fill="#000" fill-opacity="0.03"/><rect x="348.9" y="354.6" width="1.5" height="1" fill="#000" fill-opacity="0.10"/><rect x="463.3" y="354.5" width="1" height="1.5" fill="#000" fill-opacity="0.10"/><rect x="438.4" y="294.4" width="1" height="1" fill="#000" fill-opacity="0.09"/><rect x="400.6" y="399.2" width="2.5" height="2" fill="#000" fill-opacity="0.09"/><rect x="404.6" y="397.0" width="1" height="1" fill="#000" fill-opacity="0.28"/><rect x="547.1" y="380.6" width="1" height="1" fill="#000" fill-opacity="0.11"/><rect x="445.5" y="419.9" width="1.5" height="1.5" fill="#000" fill-opacity="0.13"/><rect x="444.9" y="323.8" width="1" height="1.5" fill="#000" fill-opacity="0.10"/><rect x="509.6" y="292.8" width="2" height="1" fill="#000" fill-opacity="0.09"/><rect x="596.6" y="380.1" width="2" height="1" fill="#000" fill-opacity="0.15"/><rect x="432.6" y="326.9" width="1.5" height="1.5" fill="#000" fill-opacity="0.14"/><rect x="458.8" y="292.6" width="2" height="1" fill="#000" fill-opacity="0.27"/><rect x="537.5" y="341.1" width="1.5" height="2" fill="#000" fill-opacity="0.10"/><rect x="579.2" y="423.9" width="1.5" height="1.5" fill="#000" fill-opacity="0.09"/><rect x="371.1" y="350.6" width="2" height="1" fill="#000" fill-opacity="0.07"/><rect x="499.6" y="340.5" width="2" height="1" fill="#000" fill-opacity="0.10"/><rect x="574.3" y="326.6" width="2" height="1" fill="#000" fill-opacity="0.09"/><rect x="397.0" y="441.7" width="1.5" height="1.5" fill="#000" fill-opacity="0.02"/><rect x="443.4" y="469.9" width="2.5" height="1" fill="#000" fill-opacity="0.02"/><rect x="423.4" y="329.2" width="1.5" height="2" fill="#000" fill-opacity="0.06"/><rect x="448.2" y="332.8" width="2" height="1" fill="#000" fill-opacity="0.07"/><rect x="521.4" y="413.8" width="1" height="1.5" fill="#000" fill-opacity="0.02"/><rect x="465.0" y="289.1" width="1.5" height="1" fill="#000" fill-opacity="0.10"/><rect x="552.3" y="451.3" width="1" height="1" fill="#000" fill-opacity="0.02"/><rect x="466.2" y="319.5" width="2.5" height="1" fill="#000" fill-opacity="0.08"/><rect x="570.1" y="355.2" width="1" height="1" fill="#000" fill-opacity="0.07"/><rect x="332.5" y="385.8" width="2" height="2" fill="#000" fill-opacity="0.08"/><rect x="345.6" y="363.6" width="1" height="1" fill="#000" fill-opacity="0.03"/><rect x="333.8" y="402.4" width="2.5" height="1" fill="#000" fill-opacity="0.03"/><rect x="577.8" y="420.3" width="1" height="1" fill="#000" fill-opacity="0.02"/><rect x="534.5" y="382.4" width="1" height="1" fill="#000" fill-opacity="0.08"/><rect x="439.9" y="459.7" width="1.5" height="1" fill="#000" fill-opacity="0.03"/><rect x="363.3" y="430.0" width="1" height="2" fill="#000" fill-opacity="0.05"/><rect x="401.6" y="323.1" width="1.5" height="1" fill="#000" fill-opacity="0.09"/><rect x="402.7" y="314.5" width="2" height="1" fill="#000" fill-opacity="0.05"/><rect x="398.8" y="423.3" width="2" height="1.5" fill="#000" fill-opacity="0.04"/><rect x="444.5" y="302.4" width="2.5" height="1" fill="#000" fill-opacity="0.07"/><rect x="534.7" y="466.3" width="1" height="1" fill="#000" fill-opacity="0.09"/><rect x="425.1" y="339.3" width="1" height="1" fill="#000" fill-opacity="0.16"/><rect x="521.3" y="448.5" width="2.5" height="2" fill="#000" fill-opacity="0.02"/><rect x="462.0" y="482.5" width="2.5" height="1" fill="#000" fill-opacity="0.01"/><rect x="380.0" y="459.9" width="1" height="1" fill="#000" fill-opacity="0.04"/><rect x="360.2" y="438.7" width="1" height="1" fill="#000" fill-opacity="0.13"/><rect x="377.7" y="389.0" width="2" height="1" fill="#000" fill-opacity="0.05"/><rect x="428.7" y="472.3" width="2" height="1" fill="#000" fill-opacity="0.04"/><rect x="558.8" y="343.8" width="1" height="1" fill="#000" fill-opacity="0.11"/><rect x="440.6" y="369.2" width="1" height="1" fill="#000" fill-opacity="0.04"/><rect x="490.0" y="329.2" width="1" height="2" fill="#000" fill-opacity="0.04"/><rect x="440.4" y="411.4" width="2" height="1" fill="#000" fill-opacity="0.04"/><rect x="576.7" y="427.8" width="1" height="1" fill="#000" fill-opacity="0.04"/><rect x="511.6" y="335.4" width="1" height="1" fill="#000" fill-opacity="0.05"/><rect x="378.6" y="382.2" width="1" height="2" fill="#000" fill-opacity="0.11"/><rect x="449.1" y="474.1" width="2.5" height="2" fill="#000" fill-opacity="0.05"/><rect x="598.8" y="396.9" width="2.5" height="1" fill="#000" fill-opacity="0.04"/><rect x="539.1" y="302.0" width="1" height="1" fill="#000" fill-opacity="0.04"/><rect x="426.5" y="349.4" width="2" height="1" fill="#000" fill-opacity="0.15"/><rect x="437.9" y="433.9" width="1" height="1" fill="#000" fill-opacity="0.04"/><rect x="339.7" y="421.9" width="2" height="1.5" fill="#000" fill-opacity="0.04"/><rect x="533.6" y="458.9" width="1" height="1" fill="#000" fill-opacity="0.11"/><rect x="459.8" y="357.6" width="1" height="1.5" fill="#000" fill-opacity="0.06"/><rect x="395.2" y="443.9" width="2" height="1" fill="#000" fill-opacity="0.03"/><rect x="480.6" y="316.7" width="1.5" height="1" fill="#000" fill-opacity="0.10"/><rect x="497.9" y="311.7" width="2" height="1" fill="#000" fill-opacity="0.08"/><rect x="404.4" y="323.6" width="1.5" height="1" fill="#000" fill-opacity="0.08"/><rect x="335.0" y="356.1" width="2.5" height="1" fill="#000" fill-opacity="0.09"/><rect x="504.2" y="300.9" width="2" height="1" fill="#000" fill-opacity="0.08"/><rect x="499.9" y="302.0" width="1.5" height="1" fill="#000" fill-opacity="0.08"/><rect x="591.4" y="357.0" width="1.5" height="1.5" fill="#000" fill-opacity="0.07"/><rect x="540.9" y="384.5" width="2" height="1" fill="#000" fill-opacity="0.08"/><rect x="593.9" y="414.4" width="1.5" height="1" fill="#000" fill-opacity="0.05"/><rect x="358.7" y="333.7" width="2" height="2" fill="#000" fill-opacity="0.10"/><rect x="525.5" y="459.5" width="2" height="2" fill="#000" fill-opacity="0.02"/><rect x="426.3" y="425.5" width="2" height="1.5" fill="#000" fill-opacity="0.04"/><rect x="461.2" y="466.6" width="1.5" height="1" fill="#000" fill-opacity="0.04"/><rect x="396.7" y="341.3" width="2.5" height="1.5" fill="#000" fill-opacity="0.09"/><rect x="427.6" y="472.1" width="2" height="1" fill="#000" fill-opacity="0.10"/><rect x="603.9" y="393.0" width="2" height="1" fill="#000" fill-opacity="0.17"/><rect x="345.2" y="339.1" width="2" height="1" fill="#000" fill-opacity="0.11"/><rect x="387.4" y="314.3" width="2.5" height="1" fill="#000" fill-opacity="0.05"/><rect x="536.8" y="450.6" width="1" height="1" fill="#000" fill-opacity="0.11"/><rect x="589.4" y="373.5" width="1.5" height="1" fill="#000" fill-opacity="0.22"/><rect x="362.2" y="328.0" width="1.5" height="1.5" fill="#000" fill-opacity="0.09"/><rect x="411.4" y="399.9" width="2" height="1.5" fill="#000" fill-opacity="0.09"/><rect x="439.7" y="435.5" width="2" height="1.5" fill="#000" fill-opacity="0.02"/><rect x="374.3" y="473.0" width="2.5" height="1" fill="#000" fill-opacity="0.04"/><rect x="590.6" y="411.1" width="1.5" height="1" fill="#000" fill-opacity="0.13"/><rect x="564.0" y="432.4" width="1.5" height="1" fill="#000" fill-opacity="0.05"/><rect x="384.8" y="324.1" width="2.5" height="1" fill="#000" fill-opacity="0.07"/><rect x="396.1" y="478.7" width="2.5" height="2" fill="#000" fill-opacity="0.05"/><rect x="444.7" y="442.1" width="1" height="2" fill="#000" fill-opacity="0.03"/><rect x="476.3" y="471.8" width="2.5" height="1" fill="#000" fill-opacity="0.04"/><rect x="473.9" y="307.5" width="2.5" height="1.5" fill="#000" fill-opacity="0.16"/><rect x="429.1" y="303.6" width="1" height="2" fill="#000" fill-opacity="0.07"/><rect x="358.6" y="335.2" width="2" height="1" fill="#000" fill-opacity="0.09"/><rect x="584.9" y="430.8" width="1" height="1.5" fill="#000" fill-opacity="0.02"/><rect x="360.6" y="423.4" width="2" height="1" fill="#000" fill-opacity="0.02"/><rect x="592.8" y="345.8" width="2" height="1" fill="#000" fill-opacity="0.11"/><rect x="356.7" y="354.9" width="2" height="1" fill="#000" fill-opacity="0.04"/><rect x="377.9" y="326.0" width="2" height="2" fill="#000" fill-opacity="0.08"/><rect x="496.2" y="371.0" width="2.5" height="1" fill="#000" fill-opacity="0.07"/><rect x="533.1" y="442.6" width="1.5" height="2" fill="#000" fill-opacity="0.03"/><rect x="450.7" y="442.9" width="2" height="1" fill="#000" fill-opacity="0.04"/><rect x="477.1" y="330.6" width="1.5" height="1" fill="#000" fill-opacity="0.26"/><rect x="457.2" y="358.4" width="2.5" height="2" fill="#000" fill-opacity="0.06"/><rect x="512.9" y="449.4" width="1" height="1" fill="#000" fill-opacity="0.02"/><rect x="490.6" y="313.3" width="1.5" height="1.5" fill="#000" fill-opacity="0.30"/><rect x="530.6" y="325.9" width="1.5" height="1" fill="#000" fill-opacity="0.11"/><rect x="497.2" y="446.9" width="2.5" height="1.5" fill="#000" fill-opacity="0.05"/><rect x="410.4" y="416.0" width="2" height="1.5" fill="#000" fill-opacity="0.04"/><rect x="518.9" y="381.2" width="2" height="2" fill="#000" fill-opacity="0.28"/><rect x="401.6" y="467.2" width="1" height="1" fill="#000" fill-opacity="0.05"/><rect x="422.2" y="421.7" width="1" height="1.5" fill="#000" fill-opacity="0.03"/><rect x="384.0" y="326.0" width="2.5" height="1" fill="#000" fill-opacity="0.17"/><rect x="393.4" y="313.1" width="2" height="1.5" fill="#000" fill-opacity="0.04"/><rect x="367.7" y="391.7" width="1" height="1" fill="#000" fill-opacity="0.09"/><rect x="518.9" y="310.0" width="1" height="1" fill="#000" fill-opacity="0.03"/><rect x="544.5" y="406.0" width="2" height="2" fill="#000" fill-opacity="0.08"/><rect x="482.4" y="407.5" width="2.5" height="1" fill="#000" fill-opacity="0.04"/><rect x="526.7" y="462.1" width="1" height="1" fill="#000" fill-opacity="0.10"/><rect x="509.8" y="315.0" width="2" height="1" fill="#000" fill-opacity="0.08"/><rect x="386.3" y="340.5" width="1" height="1" fill="#000" fill-opacity="0.07"/><rect x="504.3" y="337.4" width="2.5" height="1.5" fill="#000" fill-opacity="0.24"/><rect x="571.7" y="317.6" width="1.5" height="1" fill="#000" fill-opacity="0.08"/><rect x="593.9" y="374.1" width="1" height="2" fill="#000" fill-opacity="0.06"/><rect x="601.0" y="375.2" width="2.5" height="1" fill="#000" fill-opacity="0.27"/><rect x="456.2" y="361.4" width="2" height="1" fill="#000" fill-opacity="0.11"/><rect x="350.6" y="432.2" width="1.5" height="1" fill="#000" fill-opacity="0.02"/><rect x="330.1" y="428.6" width="2" height="1" fill="#000" fill-opacity="0.02"/><rect x="441.0" y="411.0" width="1.5" height="1" fill="#000" fill-opacity="0.04"/><rect x="564.3" y="326.1" width="1.5" height="1.5" fill="#000" fill-opacity="0.06"/><rect x="331.8" y="376.2" width="2.5" height="2" fill="#000" fill-opacity="0.10"/><rect x="565.9" y="349.8" width="2.5" height="1" fill="#000" fill-opacity="0.09"/><rect x="558.1" y="328.0" width="1" height="2" fill="#000" fill-opacity="0.08"/><rect x="420.0" y="303.8" width="1.5" height="1" fill="#000" fill-opacity="0.10"/><rect x="389.2" y="323.2" width="1" height="1" fill="#000" fill-opacity="0.09"/><rect x="450.8" y="426.1" width="1.5" height="1" fill="#000" fill-opacity="0.02"/><rect x="324.9" y="399.6" width="2" height="1" fill="#000" fill-opacity="0.18"/><rect x="373.2" y="460.0" width="1" height="1.5" fill="#000" fill-opacity="0.04"/><rect x="596.2" y="411.5" width="2.5" height="1" fill="#000" fill-opacity="0.01"/><rect x="518.7" y="488.3" width="2.5" height="1" fill="#000" fill-opacity="0.02"/><rect x="578.3" y="450.7" width="1" height="1" fill="#000" fill-opacity="0.01"/><rect x="506.5" y="352.2" width="2.5" height="1" fill="#000" fill-opacity="0.09"/><rect x="463.6" y="462.8" width="1" height="1" fill="#000" fill-opacity="0.03"/><rect x="474.0" y="335.6" width="2" height="1" fill="#000" fill-opacity="0.10"/><rect x="443.6" y="470.0" width="2" height="1.5" fill="#000" fill-opacity="0.02"/><rect x="396.5" y="404.7" width="1" height="1" fill="#000" fill-opacity="0.03"/><rect x="329.2" y="417.0" width="1" height="1.5" fill="#000" fill-opacity="0.03"/><rect x="562.8" y="311.0" width="2" height="2" fill="#000" fill-opacity="0.07"/><rect x="379.3" y="393.1" width="2" height="1.5" fill="#000" fill-opacity="0.04"/><rect x="509.2" y="309.1" width="1.5" height="1" fill="#000" fill-opacity="0.11"/><rect x="399.3" y="401.1" width="2" height="1" fill="#000" fill-opacity="0.04"/><rect x="404.0" y="447.3" width="1" height="1" fill="#000" fill-opacity="0.04"/><rect x="453.0" y="374.7" width="2" height="1" fill="#000" fill-opacity="0.19"/><rect x="595.9" y="374.1" width="1" height="1" fill="#000" fill-opacity="0.08"/><rect x="604.9" y="398.1" width="2.5" height="1.5" fill="#000" fill-opacity="0.05"/><rect x="524.5" y="359.6" width="2" height="1" fill="#000" fill-opacity="0.11"/><rect x="420.3" y="464.1" width="1" height="2" fill="#000" fill-opacity="0.02"/><rect x="466.2" y="387.7" width="2" height="1.5" fill="#000" fill-opacity="0.09"/><rect x="562.8" y="324.4" width="1.5" height="1.5" fill="#000" fill-opacity="0.06"/><rect x="526.3" y="294.2" width="1" height="1" fill="#000" fill-opacity="0.07"/><rect x="539.8" y="307.0" width="1" height="1.5" fill="#000" fill-opacity="0.08"/><rect x="360.9" y="341.6" width="1" height="1.5" fill="#000" fill-opacity="0.10"/><rect x="400.3" y="369.6" width="1" height="1.5" fill="#000" fill-opacity="0.07"/><rect x="443.8" y="355.2" width="2" height="1" fill="#000" fill-opacity="0.09"/><rect x="569.2" y="388.4" width="2.5" height="1" fill="#000" fill-opacity="0.06"/><rect x="611.2" y="371.5" width="2" height="1.5" fill="#000" fill-opacity="0.04"/><rect x="463.6" y="318.0" width="2" height="1" fill="#000" fill-opacity="0.05"/><rect x="414.8" y="408.7" width="2" height="2" fill="#000" fill-opacity="0.04"/><rect x="400.1" y="415.0" width="2.5" height="1" fill="#000" fill-opacity="0.02"/><rect x="404.4" y="346.8" width="1" height="2" fill="#000" fill-opacity="0.17"/><rect x="474.7" y="332.0" width="2" height="1.5" fill="#000" fill-opacity="0.28"/><rect x="406.6" y="365.3" width="2.5" height="2" fill="#000" fill-opacity="0.04"/><rect x="536.3" y="390.5" width="1" height="1" fill="#000" fill-opacity="0.09"/><rect x="500.5" y="393.5" width="1" height="1.5" fill="#000" fill-opacity="0.07"/><rect x="421.0" y="461.7" width="1" height="1" fill="#000" fill-opacity="0.02"/><rect x="507.8" y="402.7" width="1.5" height="1" fill="#000" fill-opacity="0.02"/><rect x="356.1" y="326.9" width="2.5" height="1.5" fill="#000" fill-opacity="0.09"/><rect x="483.2" y="486.1" width="1" height="1.5" fill="#000" fill-opacity="0.04"/><rect x="455.9" y="466.5" width="1" height="1" fill="#000" fill-opacity="0.02"/><rect x="434.4" y="475.2" width="1" height="1" fill="#000" fill-opacity="0.13"/><rect x="519.7" y="363.1" width="1.5" height="1" fill="#000" fill-opacity="0.07"/><rect x="420.5" y="485.9" width="1.5" height="2" fill="#000" fill-opacity="0.02"/><rect x="413.0" y="350.7" width="2" height="2" fill="#000" fill-opacity="0.25"/><rect x="381.9" y="407.1" width="2" height="1.5" fill="#000" fill-opacity="0.02"/><rect x="496.3" y="316.0" width="2.5" height="1.5" fill="#000" fill-opacity="0.06"/><rect x="339.6" y="429.1" width="1" height="1.5" fill="#000" fill-opacity="0.05"/><rect x="447.8" y="362.4" width="2.5" height="1" fill="#000" fill-opacity="0.04"/><rect x="423.6" y="418.9" width="1.5" height="1" fill="#000" fill-opacity="0.04"/><rect x="410.7" y="481.9" width="1" height="1" fill="#000" fill-opacity="0.04"/><rect x="443.8" y="322.6" width="2" height="1" fill="#000" fill-opacity="0.11"/><rect x="580.1" y="354.5" width="1" height="2" fill="#000" fill-opacity="0.09"/><rect x="408.5" y="424.2" width="2" height="1" fill="#000" fill-opacity="0.10"/><rect x="471.4" y="367.4" width="2.5" height="1" fill="#000" fill-opacity="0.24"/><rect x="420.1" y="476.2" width="2.5" height="1.5" fill="#000" fill-opacity="0.01"/><rect x="604.3" y="413.8" width="1.5" height="1" fill="#000" fill-opacity="0.03"/><rect x="424.5" y="430.6" width="2" height="2" fill="#000" fill-opacity="0.02"/><rect x="584.7" y="339.9" width="1" height="1" fill="#000" fill-opacity="0.08"/><rect x="371.6" y="465.9" width="1.5" height="1" fill="#000" fill-opacity="0.04"/><rect x="548.3" y="311.9" width="2.5" height="2" fill="#000" fill-opacity="0.03"/><rect x="539.9" y="329.1" width="2" height="1" fill="#000" fill-opacity="0.06"/><rect x="385.0" y="458.9" width="2" height="1.5" fill="#000" fill-opacity="0.03"/><rect x="383.4" y="454.1" width="1.5" height="1" fill="#000" fill-opacity="0.02"/><rect x="549.0" y="330.8" width="2" height="1" fill="#000" fill-opacity="0.06"/><rect x="554.9" y="329.7" width="1.5" height="1" fill="#000" fill-opacity="0.08"/><rect x="357.5" y="416.8" width="1" height="1" fill="#000" fill-opacity="0.04"/><rect x="489.6" y="327.8" width="1" height="1" fill="#000" fill-opacity="0.11"/><rect x="459.9" y="340.8" width="2" height="1" fill="#000" fill-opacity="0.11"/><rect x="321.2" y="387.8" width="1" height="1" fill="#000" fill-opacity="0.06"/><rect x="533.1" y="301.3" width="2.5" height="2" fill="#000" fill-opacity="0.16"/><rect x="429.4" y="380.9" width="2" height="1" fill="#000" fill-opacity="0.10"/><rect x="401.6" y="372.7" width="2" height="1" fill="#000" fill-opacity="0.05"/><rect x="446.3" y="466.4" width="1" height="1" fill="#000" fill-opacity="0.05"/><rect x="529.1" y="471.8" width="1" height="2" fill="#000" fill-opacity="0.04"/><rect x="591.8" y="375.1" width="2" height="1" fill="#000" fill-opacity="0.10"/><rect x="508.0" y="374.4" width="1" height="1" fill="#000" fill-opacity="0.23"/><rect x="389.5" y="431.1" width="2" height="1" fill="#000" fill-opacity="0.04"/><rect x="546.5" y="385.4" width="2" height="1" fill="#000" fill-opacity="0.08"/><rect x="403.3" y="410.0" width="1.5" height="1" fill="#000" fill-opacity="0.04"/><rect x="477.1" y="306.6" width="2" height="1" fill="#000" fill-opacity="0.07"/><rect x="385.0" y="397.5" width="1" height="1.5" fill="#000" fill-opacity="0.09"/><rect x="405.1" y="470.0" width="2" height="2" fill="#000" fill-opacity="0.01"/><rect x="483.9" y="314.0" width="2.5" height="1.5" fill="#000" fill-opacity="0.24"/><rect x="532.4" y="463.4" width="2.5" height="1" fill="#000" fill-opacity="0.03"/><rect x="414.5" y="474.5" width="1" height="2" fill="#000" fill-opacity="0.04"/><rect x="458.5" y="434.2" width="2" height="1" fill="#000" fill-opacity="0.03"/><rect x="452.9" y="473.7" width="1.5" height="1.5" fill="#000" fill-opacity="0.02"/><rect x="379.1" y="341.4" width="2" height="1" fill="#000" fill-opacity="0.10"/><rect x="380.9" y="384.9" width="1" height="1.5" fill="#000" fill-opacity="0.05"/><rect x="453.9" y="479.3" width="1" height="2" fill="#000" fill-opacity="0.05"/><rect x="475.9" y="341.9" width="2" height="1.5" fill="#000" fill-opacity="0.08"/><rect x="449.5" y="342.9" width="1" height="1" fill="#000" fill-opacity="0.03"/><rect x="410.0" y="478.0" width="1" height="1" fill="#000" fill-opacity="0.03"/><rect x="539.6" y="373.1" width="1.5" height="1.5" fill="#000" fill-opacity="0.07"/><rect x="431.0" y="390.2" width="1" height="1" fill="#000" fill-opacity="0.27"/><rect x="377.8" y="333.2" width="1" height="1.5" fill="#000" fill-opacity="0.10"/><rect x="572.0" y="395.0" width="2" height="1" fill="#000" fill-opacity="0.29"/><rect x="406.9" y="378.9" width="2.5" height="1" fill="#000" fill-opacity="0.10"/><rect x="426.2" y="292.6" width="2.5" height="1" fill="#000" fill-opacity="0.09"/><rect x="355.3" y="451.1" width="2" height="1" fill="#000" fill-opacity="0.03"/><rect x="451.2" y="488.6" width="1" height="2" fill="#000" fill-opacity="0.02"/><rect x="468.6" y="328.8" width="2" height="1.5" fill="#000" fill-opacity="0.28"/><rect x="573.1" y="381.3" width="2" height="1" fill="#000" fill-opacity="0.10"/><rect x="380.7" y="355.9" width="1" height="1" fill="#000" fill-opacity="0.10"/><rect x="390.0" y="344.3" width="1" height="1.5" fill="#000" fill-opacity="0.04"/><rect x="342.4" y="404.8" width="1.5" height="1" fill="#000" fill-opacity="0.03"/><rect x="356.6" y="391.4" width="2.5" height="1" fill="#000" fill-opacity="0.10"/><rect x="351.3" y="457.2" width="2.5" height="1" fill="#000" fill-opacity="0.02"/><rect x="358.0" y="329.5" width="1.5" height="1.5" fill="#000" fill-opacity="0.18"/><rect x="364.6" y="393.2" width="1" height="1" fill="#000" fill-opacity="0.07"/><rect x="437.7" y="307.3" width="1" height="1" fill="#000" fill-opacity="0.09"/><rect x="384.8" y="319.0" width="1" height="1.5" fill="#000" fill-opacity="0.18"/><rect x="509.9" y="391.6" width="2" height="1" fill="#000" fill-opacity="0.10"/><rect x="507.6" y="302.7" width="2" height="1.5" fill="#000" fill-opacity="0.29"/><rect x="525.0" y="362.5" width="2" height="1" fill="#000" fill-opacity="0.28"/><rect x="329.1" y="416.5" width="2" height="2" fill="#000" fill-opacity="0.03"/><rect x="551.7" y="434.3" width="1.5" height="1" fill="#000" fill-opacity="0.03"/><rect x="453.0" y="417.6" width="1.5" height="1.5" fill="#000" fill-opacity="0.03"/><rect x="576.9" y="364.0" width="2.5" height="1" fill="#000" fill-opacity="0.10"/><rect x="418.5" y="330.6" width="2.5" height="1" fill="#000" fill-opacity="0.08"/><rect x="402.5" y="423.3" width="2.5" height="1" fill="#000" fill-opacity="0.02"/><rect x="533.8" y="431.6" width="2.5" height="1" fill="#000" fill-opacity="0.05"/><rect x="542.4" y="419.4" width="1.5" height="2" fill="#000" fill-opacity="0.02"/><rect x="341.1" y="349.0" width="1" height="1" fill="#000" fill-opacity="0.10"/><rect x="379.0" y="388.3" width="2.5" height="1" fill="#000" fill-opacity="0.10"/><rect x="524.4" y="382.1" width="1" height="1.5" fill="#000" fill-opacity="0.08"/><rect x="605.9" y="355.8" width="2.5" height="1.5" fill="#000" fill-opacity="0.09"/><rect x="378.5" y="371.9" width="1" height="1" fill="#000" fill-opacity="0.04"/><rect x="357.6" y="348.1" width="2" height="1" fill="#000" fill-opacity="0.06"/><rect x="443.4" y="388.7" width="1" height="1" fill="#000" fill-opacity="0.10"/><rect x="466.0" y="433.3" width="1.5" height="1.5" fill="#000" fill-opacity="0.02"/><rect x="399.0" y="309.3" width="1" height="2" fill="#000" fill-opacity="0.17"/><rect x="458.2" y="485.1" width="1" height="1.5" fill="#000" fill-opacity="0.02"/><rect x="483.9" y="314.1" width="2" height="1" fill="#000" fill-opacity="0.16"/><rect x="325.7" y="387.0" width="2.5" height="1" fill="#000" fill-opacity="0.09"/><rect x="461.0" y="421.7" width="2.5" height="1" fill="#000" fill-opacity="0.02"/><rect x="416.1" y="326.5" width="2" height="1" fill="#000" fill-opacity="0.08"/><rect x="494.2" y="361.2" width="1" height="1" fill="#000" fill-opacity="0.16"/><rect x="360.9" y="399.2" width="2" height="2" fill="#000" fill-opacity="0.05"/><rect x="584.1" y="348.1" width="2" height="1.5" fill="#000" fill-opacity="0.08"/><rect x="429.9" y="312.8" width="2.5" height="1" fill="#000" fill-opacity="0.06"/><rect x="573.5" y="413.3" width="1.5" height="1.5" fill="#000" fill-opacity="0.02"/><rect x="568.4" y="377.5" width="2.5" height="1.5" fill="#000" fill-opacity="0.24"/><rect x="461.6" y="383.1" width="1.5" height="2" fill="#000" fill-opacity="0.10"/><rect x="489.4" y="289.4" width="2.5" height="2" fill="#000" fill-opacity="0.05"/><rect x="503.5" y="482.0" width="1" height="2" fill="#000" fill-opacity="0.03"/><rect x="364.8" y="392.6" width="2" height="1" fill="#000" fill-opacity="0.09"/><rect x="426.8" y="301.3" width="2" height="2" fill="#000" fill-opacity="0.05"/><rect x="366.4" y="446.2" width="2.5" height="1" fill="#000" fill-opacity="0.04"/><rect x="442.2" y="319.6" width="2.5" height="1" fill="#000" fill-opacity="0.30"/><rect x="351.6" y="438.2" width="1" height="1" fill="#000" fill-opacity="0.03"/><rect x="375.1" y="432.6" width="1.5" height="1" fill="#000" fill-opacity="0.03"/><rect x="442.7" y="302.1" width="1" height="1" fill="#000" fill-opacity="0.15"/><rect x="564.1" y="417.4" width="1" height="1" fill="#000" fill-opacity="0.03"/><rect x="401.0" y="360.4" width="2" height="1" fill="#000" fill-opacity="0.04"/><rect x="443.8" y="435.8" width="1" height="1" fill="#000" fill-opacity="0.03"/><rect x="341.1" y="413.1" width="2" height="1" fill="#000" fill-opacity="0.04"/><rect x="554.2" y="433.3" width="1.5" height="1" fill="#000" fill-opacity="0.07"/><rect x="547.4" y="381.9" width="2" height="1" fill="#000" fill-opacity="0.03"/><rect x="502.9" y="302.3" width="2" height="1.5" fill="#000" fill-opacity="0.15"/><rect x="404.9" y="430.8" width="2" height="2" fill="#000" fill-opacity="0.07"/><rect x="601.8" y="353.0" width="1" height="1" fill="#000" fill-opacity="0.05"/><rect x="523.4" y="391.8" width="2" height="1.5" fill="#000" fill-opacity="0.05"/><rect x="435.4" y="315.3" width="2" height="2" fill="#000" fill-opacity="0.06"/><rect x="516.9" y="344.6" width="1.5" height="2" fill="#000" fill-opacity="0.08"/><rect x="457.6" y="430.1" width="1" height="1" fill="#000" fill-opacity="0.03"/><rect x="424.9" y="451.4" width="2" height="1" fill="#000" fill-opacity="0.09"/><rect x="407.7" y="420.1" width="2" height="1" fill="#000" fill-opacity="0.02"/><rect x="493.2" y="313.3" width="2.5" height="1" fill="#000" fill-opacity="0.05"/><rect x="582.6" y="361.9" width="2" height="1" fill="#000" fill-opacity="0.04"/><rect x="500.4" y="435.5" width="1" height="2" fill="#000" fill-opacity="0.08"/><rect x="344.4" y="375.6" width="1.5" height="1" fill="#000" fill-opacity="0.05"/><rect x="598.6" y="368.7" width="2.5" height="1.5" fill="#000" fill-opacity="0.06"/><rect x="598.4" y="426.4" width="2.5" height="2" fill="#000" fill-opacity="0.02"/><rect x="508.0" y="343.4" width="1" height="2" fill="#000" fill-opacity="0.21"/><rect x="519.2" y="308.7" width="1" height="1" fill="#000" fill-opacity="0.19"/><rect x="557.7" y="400.0" width="1" height="1" fill="#000" fill-opacity="0.05"/><rect x="446.3" y="490.3" width="2" height="2" fill="#000" fill-opacity="0.02"/><rect x="582.6" y="341.8" width="1" height="2" fill="#000" fill-opacity="0.08"/><rect x="535.0" y="340.2" width="2" height="1" fill="#000" fill-opacity="0.18"/><rect x="446.3" y="495.8" width="1.5" height="1.5" fill="#000" fill-opacity="0.02"/><rect x="343.2" y="433.2" width="2" height="1" fill="#000" fill-opacity="0.04"/><rect x="500.5" y="303.3" width="2" height="1.5" fill="#000" fill-opacity="0.09"/><rect x="403.6" y="418.6" width="1" height="1" fill="#000" fill-opacity="0.04"/><rect x="397.9" y="367.5" width="1.5" height="1" fill="#000" fill-opacity="0.04"/><rect x="362.9" y="366.0" width="1" height="1" fill="#000" fill-opacity="0.04"/><rect x="560.5" y="375.5" width="2.5" height="1.5" fill="#000" fill-opacity="0.04"/><rect x="375.0" y="439.9" width="2" height="1.5" fill="#000" fill-opacity="0.02"/><rect x="444.9" y="298.9" width="1" height="1.5" fill="#000" fill-opacity="0.07"/><rect x="582.7" y="446.3" width="2.5" height="2" fill="#000" fill-opacity="0.03"/><rect x="546.2" y="300.6" width="2" height="1" fill="#000" fill-opacity="0.06"/><rect x="415.9" y="394.9" width="1" height="1" fill="#000" fill-opacity="0.09"/><rect x="430.1" y="471.2" width="2.5" height="1.5" fill="#000" fill-opacity="0.02"/><rect x="560.5" y="394.7" width="1" height="1" fill="#000" fill-opacity="0.06"/><rect x="372.6" y="453.0" width="2" height="1" fill="#000" fill-opacity="0.04"/><rect x="461.3" y="299.6" width="2" height="1" fill="#000" fill-opacity="0.06"/><rect x="540.9" y="339.0" width="2" height="2" fill="#000" fill-opacity="0.30"/><rect x="403.1" y="386.2" width="2" height="1" fill="#000" fill-opacity="0.08"/><rect x="374.9" y="322.9" width="1.5" height="1.5" fill="#000" fill-opacity="0.09"/><rect x="379.2" y="418.2" width="1" height="1" fill="#000" fill-opacity="0.02"/><rect x="483.1" y="325.9" width="1" height="1" fill="#000" fill-opacity="0.04"/><rect x="495.5" y="378.5" width="1" height="2" fill="#000" fill-opacity="0.07"/><rect x="410.8" y="417.2" width="2" height="1.5" fill="#000" fill-opacity="0.05"/><rect x="406.9" y="433.0" width="2" height="1.5" fill="#000" fill-opacity="0.03"/><rect x="522.5" y="313.9" width="1" height="1" fill="#000" fill-opacity="0.09"/><rect x="451.9" y="441.5" width="1.5" height="1" fill="#000" fill-opacity="0.01"/><rect x="565.0" y="426.3" width="2" height="1" fill="#000" fill-opacity="0.04"/></g><g fill="none" stroke-linecap="butt"><line x1="481.3" y1="400" x2="481.3" y2="538" stroke="#808080" stroke-width="1.3"/></g><g fill="none" stroke="#000" stroke-width="1"><line x1="481.3" y1="400.4" x2="493.2" y2="471" stroke-opacity="0.5"/><line x1="481.3" y1="400.4" x2="493.2" y2="471" stroke-opacity="0.75" stroke-dasharray="5 4"/><line x1="340.5" y1="415.2" x2="481.3" y2="400.4" stroke-opacity="0.5"/><line x1="340.5" y1="415.2" x2="481.3" y2="400.4" stroke-opacity="0.75" stroke-dasharray="12 9"/></g><g><circle cx="397.7" cy="318.9" r="4.6" fill="#1e6a73"/><circle cx="397.7" cy="318.9" r="4.2" fill="url(#sh)" stroke="#01121c" stroke-opacity=".42" stroke-width=".8"/><circle cx="408.3" cy="336.9" r="4.6" fill="#96be22"/><circle cx="408.3" cy="336.9" r="4.2" fill="url(#sh)" stroke="#01121c" stroke-opacity=".42" stroke-width=".8"/><circle cx="410.3" cy="332.5" r="4.6" fill="#1e6a73"/><circle cx="410.3" cy="332.5" r="4.2" fill="url(#sh)" stroke="#01121c" stroke-opacity=".42" stroke-width=".8"/><circle cx="453.4" cy="331.6" r="4.6" fill="#1e6a73"/><circle cx="453.4" cy="331.6" r="4.2" fill="url(#sh)" stroke="#01121c" stroke-opacity=".42" stroke-width=".8"/><circle cx="471.9" cy="329.4" r="4.6" fill="#1e6a73"/><circle cx="471.9" cy="329.4" r="4.2" fill="url(#sh)" stroke="#01121c" stroke-opacity=".42" stroke-width=".8"/><circle cx="470.2" cy="338.3" r="4.6" fill="#dac51d"/><circle cx="470.2" cy="338.3" r="4.2" fill="url(#sh)" stroke="#01121c" stroke-opacity=".42" stroke-width=".8"/><circle cx="466.3" cy="344.7" r="4.6" fill="#dac51d"/><circle cx="466.3" cy="344.7" r="4.2" fill="url(#sh)" stroke="#01121c" stroke-opacity=".42" stroke-width=".8"/><circle cx="451.3" cy="340.8" r="4.6" fill="#1e6a73"/><circle cx="451.3" cy="340.8" r="4.2" fill="url(#sh)" stroke="#01121c" stroke-opacity=".42" stroke-width=".8"/><circle cx="455.6" cy="348.5" r="4.6" fill="#1e8a70"/><circle cx="455.6" cy="348.5" r="4.2" fill="url(#sh)" stroke="#01121c" stroke-opacity=".42" stroke-width=".8"/><circle cx="458.0" cy="345.1" r="4.6" fill="#225674"/><circle cx="458.0" cy="345.1" r="4.2" fill="url(#sh)" stroke="#01121c" stroke-opacity=".42" stroke-width=".8"/><circle cx="433.0" cy="342.7" r="4.6" fill="#1e6a73"/><circle cx="433.0" cy="342.7" r="4.2" fill="url(#sh)" stroke="#01121c" stroke-opacity=".42" stroke-width=".8"/><circle cx="421.2" cy="349.0" r="4.6" fill="#1e8a70"/><circle cx="421.2" cy="349.0" r="4.2" fill="url(#sh)" stroke="#01121c" stroke-opacity=".42" stroke-width=".8"/><circle cx="422.9" cy="345.6" r="4.6" fill="#1e6a73"/><circle cx="422.9" cy="345.6" r="4.2" fill="url(#sh)" stroke="#01121c" stroke-opacity=".42" stroke-width=".8"/><circle cx="437.7" cy="350.5" r="4.6" fill="#1e7c78"/><circle cx="437.7" cy="350.5" r="4.2" fill="url(#sh)" stroke="#01121c" stroke-opacity=".42" stroke-width=".8"/><circle cx="439.6" cy="347.6" r="4.6" fill="#1e6a73"/><circle cx="439.6" cy="347.6" r="4.2" fill="url(#sh)" stroke="#01121c" stroke-opacity=".42" stroke-width=".8"/><circle cx="447.9" cy="346.6" r="4.6" fill="#1e6a73"/><circle cx="447.9" cy="346.6" r="4.2" fill="url(#sh)" stroke="#01121c" stroke-opacity=".42" stroke-width=".8"/><circle cx="402.7" cy="351.5" r="4.6" fill="#1e6a73"/><circle cx="402.7" cy="351.5" r="4.2" fill="url(#sh)" stroke="#01121c" stroke-opacity=".42" stroke-width=".8"/><circle cx="374.1" cy="357.3" r="4.6" fill="#1e8a70"/><circle cx="374.1" cy="357.3" r="4.2" fill="url(#sh)" stroke="#01121c" stroke-opacity=".42" stroke-width=".8"/><circle cx="376.3" cy="353.9" r="4.6" fill="#1e6a73"/><circle cx="376.3" cy="353.9" r="4.2" fill="url(#sh)" stroke="#01121c" stroke-opacity=".42" stroke-width=".8"/><circle cx="382.8" cy="358.7" r="4.6" fill="#1e8a70"/><circle cx="382.8" cy="358.7" r="4.2" fill="url(#sh)" stroke="#01121c" stroke-opacity=".42" stroke-width=".8"/><circle cx="384.3" cy="354.4" r="4.6" fill="#1e6a73"/><circle cx="384.3" cy="354.4" r="4.2" fill="url(#sh)" stroke="#01121c" stroke-opacity=".42" stroke-width=".8"/><circle cx="392.8" cy="354.4" r="4.6" fill="#1e6a73"/><circle cx="392.8" cy="354.4" r="4.2" fill="url(#sh)" stroke="#01121c" stroke-opacity=".42" stroke-width=".8"/><circle cx="445.4" cy="356.3" r="4.6" fill="#1e6a73"/><circle cx="445.4" cy="356.3" r="4.2" fill="url(#sh)" stroke="#01121c" stroke-opacity=".42" stroke-width=".8"/><circle cx="453.7" cy="357.3" r="4.6" fill="#225674"/><circle cx="453.7" cy="357.3" r="4.2" fill="url(#sh)" stroke="#01121c" stroke-opacity=".42" stroke-width=".8"/><circle cx="460.5" cy="361.7" r="4.6" fill="#1e6a73"/><circle cx="460.5" cy="361.7" r="4.2" fill="url(#sh)" stroke="#01121c" stroke-opacity=".42" stroke-width=".8"/><circle cx="433.3" cy="363.6" r="4.6" fill="#dac51d"/><circle cx="433.3" cy="363.6" r="4.2" fill="url(#sh)" stroke="#01121c" stroke-opacity=".42" stroke-width=".8"/><circle cx="435.5" cy="359.4" r="4.6" fill="#2c9e5b"/><circle cx="435.5" cy="359.4" r="4.2" fill="url(#sh)" stroke="#01121c" stroke-opacity=".42" stroke-width=".8"/><circle cx="396.4" cy="368.4" r="4.6" fill="#2b4277"/><circle cx="396.4" cy="368.4" r="4.2" fill="url(#sh)" stroke="#01121c" stroke-opacity=".42" stroke-width=".8"/><circle cx="405.6" cy="369.9" r="4.6" fill="#1e6a73"/><circle cx="405.6" cy="369.9" r="4.2" fill="url(#sh)" stroke="#01121c" stroke-opacity=".42" stroke-width=".8"/><circle cx="414.4" cy="369.4" r="4.6" fill="#1e6a73"/><circle cx="414.4" cy="369.4" r="4.2" fill="url(#sh)" stroke="#01121c" stroke-opacity=".42" stroke-width=".8"/><circle cx="398.6" cy="364.1" r="4.6" fill="#6db637"/><circle cx="398.6" cy="364.1" r="4.2" fill="url(#sh)" stroke="#01121c" stroke-opacity=".42" stroke-width=".8"/><circle cx="407.6" cy="364.9" r="4.6" fill="#96be22"/><circle cx="407.6" cy="364.9" r="4.2" fill="url(#sh)" stroke="#01121c" stroke-opacity=".42" stroke-width=".8"/><circle cx="417.3" cy="361.7" r="4.6" fill="#2c9e5b"/><circle cx="417.3" cy="361.7" r="4.2" fill="url(#sh)" stroke="#01121c" stroke-opacity=".42" stroke-width=".8"/><circle cx="449.8" cy="363.6" r="4.6" fill="#1f5f75"/><circle cx="449.8" cy="363.6" r="4.2" fill="url(#sh)" stroke="#01121c" stroke-opacity=".42" stroke-width=".8"/><circle cx="458.1" cy="364.6" r="4.6" fill="#1f5f75"/><circle cx="458.1" cy="364.6" r="4.2" fill="url(#sh)" stroke="#01121c" stroke-opacity=".42" stroke-width=".8"/><circle cx="440.1" cy="367.5" r="4.6" fill="#1e6a73"/><circle cx="440.1" cy="367.5" r="4.2" fill="url(#sh)" stroke="#01121c" stroke-opacity=".42" stroke-width=".8"/><circle cx="385.0" cy="374.6" r="4.6" fill="#2c9e5b"/><circle cx="385.0" cy="374.6" r="4.2" fill="url(#sh)" stroke="#01121c" stroke-opacity=".42" stroke-width=".8"/><circle cx="447.9" cy="372.8" r="4.6" fill="#1e8a70"/><circle cx="447.9" cy="372.8" r="4.2" fill="url(#sh)" stroke="#01121c" stroke-opacity=".42" stroke-width=".8"/><circle cx="466.3" cy="370.4" r="4.6" fill="#1e6a73"/><circle cx="466.3" cy="370.4" r="4.2" fill="url(#sh)" stroke="#01121c" stroke-opacity=".42" stroke-width=".8"/><circle cx="474.6" cy="370.9" r="4.6" fill="#225674"/><circle cx="474.6" cy="370.9" r="4.2" fill="url(#sh)" stroke="#01121c" stroke-opacity=".42" stroke-width=".8"/><circle cx="411.5" cy="377.2" r="4.6" fill="#1e6a73"/><circle cx="411.5" cy="377.2" r="4.2" fill="url(#sh)" stroke="#01121c" stroke-opacity=".42" stroke-width=".8"/><circle cx="420.2" cy="378.6" r="4.6" fill="#225674"/><circle cx="420.2" cy="378.6" r="4.2" fill="url(#sh)" stroke="#01121c" stroke-opacity=".42" stroke-width=".8"/><circle cx="429.4" cy="375.7" r="4.6" fill="#1f5f75"/><circle cx="429.4" cy="375.7" r="4.2" fill="url(#sh)" stroke="#01121c" stroke-opacity=".42" stroke-width=".8"/><circle cx="438.2" cy="376.2" r="4.6" fill="#225674"/><circle cx="438.2" cy="376.2" r="4.2" fill="url(#sh)" stroke="#01121c" stroke-opacity=".42" stroke-width=".8"/><circle cx="461.0" cy="382.5" r="4.6" fill="#6db637"/><circle cx="461.0" cy="382.5" r="4.2" fill="url(#sh)" stroke="#01121c" stroke-opacity=".42" stroke-width=".8"/><circle cx="454.7" cy="377.7" r="4.6" fill="#1e8a70"/><circle cx="454.7" cy="377.7" r="4.2" fill="url(#sh)" stroke="#01121c" stroke-opacity=".42" stroke-width=".8"/><circle cx="462.4" cy="377.7" r="4.6" fill="#225674"/><circle cx="462.4" cy="377.7" r="4.2" fill="url(#sh)" stroke="#01121c" stroke-opacity=".42" stroke-width=".8"/><circle cx="407.6" cy="384.5" r="4.6" fill="#1e6a73"/><circle cx="407.6" cy="384.5" r="4.2" fill="url(#sh)" stroke="#01121c" stroke-opacity=".42" stroke-width=".8"/><circle cx="405.6" cy="388.8" r="4.6" fill="#1e6a73"/><circle cx="405.6" cy="388.8" r="4.2" fill="url(#sh)" stroke="#01121c" stroke-opacity=".42" stroke-width=".8"/><circle cx="423.6" cy="385.4" r="4.6" fill="#1e6a73"/><circle cx="423.6" cy="385.4" r="4.2" fill="url(#sh)" stroke="#01121c" stroke-opacity=".42" stroke-width=".8"/><circle cx="434.3" cy="383.5" r="4.6" fill="#1f5f75"/><circle cx="434.3" cy="383.5" r="4.2" fill="url(#sh)" stroke="#01121c" stroke-opacity=".42" stroke-width=".8"/><circle cx="452.2" cy="382.0" r="4.6" fill="#1e6a73"/><circle cx="452.2" cy="382.0" r="4.2" fill="url(#sh)" stroke="#01121c" stroke-opacity=".42" stroke-width=".8"/><circle cx="413.9" cy="394.2" r="4.6" fill="#1e8a70"/><circle cx="413.9" cy="394.2" r="4.2" fill="url(#sh)" stroke="#01121c" stroke-opacity=".42" stroke-width=".8"/><circle cx="395.7" cy="395.6" r="4.6" fill="#1e7c78"/><circle cx="395.7" cy="395.6" r="4.2" fill="url(#sh)" stroke="#01121c" stroke-opacity=".42" stroke-width=".8"/><circle cx="377.5" cy="398.5" r="4.6" fill="#1e6a73"/><circle cx="377.5" cy="398.5" r="4.2" fill="url(#sh)" stroke="#01121c" stroke-opacity=".42" stroke-width=".8"/><circle cx="427.0" cy="402.6" r="4.6" fill="#1e6a73"/><circle cx="427.0" cy="402.6" r="4.2" fill="url(#sh)" stroke="#01121c" stroke-opacity=".42" stroke-width=".8"/><circle cx="436.7" cy="401.7" r="4.6" fill="#225674"/><circle cx="436.7" cy="401.7" r="4.2" fill="url(#sh)" stroke="#01121c" stroke-opacity=".42" stroke-width=".8"/><circle cx="452.7" cy="401.7" r="4.6" fill="#1e6a73"/><circle cx="452.7" cy="401.7" r="4.2" fill="url(#sh)" stroke="#01121c" stroke-opacity=".42" stroke-width=".8"/><circle cx="428.0" cy="397.9" r="4.6" fill="#225674"/><circle cx="428.0" cy="397.9" r="4.2" fill="url(#sh)" stroke="#01121c" stroke-opacity=".42" stroke-width=".8"/><circle cx="438.4" cy="396.0" r="4.6" fill="#225674"/><circle cx="438.4" cy="396.0" r="4.2" fill="url(#sh)" stroke="#01121c" stroke-opacity=".42" stroke-width=".8"/><circle cx="446.9" cy="396.7" r="4.6" fill="#1e6a73"/><circle cx="446.9" cy="396.7" r="4.2" fill="url(#sh)" stroke="#01121c" stroke-opacity=".42" stroke-width=".8"/><circle cx="455.6" cy="397.2" r="4.6" fill="#1f5f75"/><circle cx="455.6" cy="397.2" r="4.2" fill="url(#sh)" stroke="#01121c" stroke-opacity=".42" stroke-width=".8"/><circle cx="502.0" cy="320.4" r="4.6" fill="#1e6a73"/><circle cx="502.0" cy="320.4" r="4.2" fill="url(#sh)" stroke="#01121c" stroke-opacity=".42" stroke-width=".8"/><circle cx="511.9" cy="317.7" r="4.6" fill="#1e7c78"/><circle cx="511.9" cy="317.7" r="4.2" fill="url(#sh)" stroke="#01121c" stroke-opacity=".42" stroke-width=".8"/><circle cx="520.5" cy="318.3" r="4.6" fill="#1e6a73"/><circle cx="520.5" cy="318.3" r="4.2" fill="url(#sh)" stroke="#01121c" stroke-opacity=".42" stroke-width=".8"/><circle cx="473.9" cy="348.0" r="4.6" fill="#2c9e5b"/><circle cx="473.9" cy="348.0" r="4.2" fill="url(#sh)" stroke="#01121c" stroke-opacity=".42" stroke-width=".8"/><circle cx="474.9" cy="343.7" r="4.6" fill="#1e6a73"/><circle cx="474.9" cy="343.7" r="4.2" fill="url(#sh)" stroke="#01121c" stroke-opacity=".42" stroke-width=".8"/><circle cx="478.3" cy="338.3" r="4.6" fill="#1f5f75"/><circle cx="478.3" cy="338.3" r="4.2" fill="url(#sh)" stroke="#01121c" stroke-opacity=".42" stroke-width=".8"/><circle cx="491.8" cy="343.2" r="4.6" fill="#1e7c78"/><circle cx="491.8" cy="343.2" r="4.2" fill="url(#sh)" stroke="#01121c" stroke-opacity=".42" stroke-width=".8"/><circle cx="493.3" cy="340.8" r="4.6" fill="#1e7c78"/><circle cx="493.3" cy="340.8" r="4.2" fill="url(#sh)" stroke="#01121c" stroke-opacity=".42" stroke-width=".8"/><circle cx="488.0" cy="335.7" r="4.6" fill="#1e6a73"/><circle cx="488.0" cy="335.7" r="4.2" fill="url(#sh)" stroke="#01121c" stroke-opacity=".42" stroke-width=".8"/><circle cx="496.4" cy="336.7" r="4.6" fill="#1f5f75"/><circle cx="496.4" cy="336.7" r="4.2" fill="url(#sh)" stroke="#01121c" stroke-opacity=".42" stroke-width=".8"/><circle cx="503.0" cy="340.8" r="4.6" fill="#6db637"/><circle cx="503.0" cy="340.8" r="4.2" fill="url(#sh)" stroke="#01121c" stroke-opacity=".42" stroke-width=".8"/><circle cx="506.4" cy="333.5" r="4.6" fill="#1f5f75"/><circle cx="506.4" cy="333.5" r="4.2" fill="url(#sh)" stroke="#01121c" stroke-opacity=".42" stroke-width=".8"/><circle cx="512.7" cy="337.4" r="4.6" fill="#2c9e5b"/><circle cx="512.7" cy="337.4" r="4.2" fill="url(#sh)" stroke="#01121c" stroke-opacity=".42" stroke-width=".8"/><circle cx="529.7" cy="335.4" r="4.6" fill="#1e8a70"/><circle cx="529.7" cy="335.4" r="4.2" fill="url(#sh)" stroke="#01121c" stroke-opacity=".42" stroke-width=".8"/><circle cx="532.6" cy="331.3" r="4.6" fill="#1e6a73"/><circle cx="532.6" cy="331.3" r="4.2" fill="url(#sh)" stroke="#01121c" stroke-opacity=".42" stroke-width=".8"/><circle cx="539.4" cy="335.7" r="4.6" fill="#1e6a73"/><circle cx="539.4" cy="335.7" r="4.2" fill="url(#sh)" stroke="#01121c" stroke-opacity=".42" stroke-width=".8"/><circle cx="547.7" cy="336.4" r="4.6" fill="#1e8a70"/><circle cx="547.7" cy="336.4" r="4.2" fill="url(#sh)" stroke="#01121c" stroke-opacity=".42" stroke-width=".8"/><circle cx="550.8" cy="329.3" r="4.6" fill="#1f5f75"/><circle cx="550.8" cy="329.3" r="4.2" fill="url(#sh)" stroke="#01121c" stroke-opacity=".42" stroke-width=".8"/><circle cx="563.4" cy="343.0" r="4.6" fill="#225674"/><circle cx="563.4" cy="343.0" r="4.2" fill="url(#sh)" stroke="#01121c" stroke-opacity=".42" stroke-width=".8"/><circle cx="566.1" cy="359.2" r="4.6" fill="#1f5f75"/><circle cx="566.1" cy="359.2" r="4.2" fill="url(#sh)" stroke="#01121c" stroke-opacity=".42" stroke-width=".8"/><circle cx="560.3" cy="375.5" r="4.6" fill="#225674"/><circle cx="560.3" cy="375.5" r="4.2" fill="url(#sh)" stroke="#01121c" stroke-opacity=".42" stroke-width=".8"/><circle cx="562.7" cy="391.7" r="4.6" fill="#1f5f75"/><circle cx="562.7" cy="391.7" r="4.2" fill="url(#sh)" stroke="#01121c" stroke-opacity=".42" stroke-width=".8"/><circle cx="542.0" cy="377.7" r="4.6" fill="#2c9e5b"/><circle cx="542.0" cy="377.7" r="4.2" fill="url(#sh)" stroke="#01121c" stroke-opacity=".42" stroke-width=".8"/><circle cx="533.1" cy="352.4" r="4.6" fill="#1f5f75"/><circle cx="533.1" cy="352.4" r="4.2" fill="url(#sh)" stroke="#01121c" stroke-opacity=".42" stroke-width=".8"/><circle cx="523.4" cy="354.9" r="4.6" fill="#1e8a70"/><circle cx="523.4" cy="354.9" r="4.2" fill="url(#sh)" stroke="#01121c" stroke-opacity=".42" stroke-width=".8"/><circle cx="527.1" cy="347.4" r="4.6" fill="#1e7c78"/><circle cx="527.1" cy="347.4" r="4.2" fill="url(#sh)" stroke="#01121c" stroke-opacity=".42" stroke-width=".8"/><circle cx="535.5" cy="348.1" r="4.6" fill="#96be22"/><circle cx="535.5" cy="348.1" r="4.2" fill="url(#sh)" stroke="#01121c" stroke-opacity=".42" stroke-width=".8"/><circle cx="516.8" cy="350.5" r="4.6" fill="#1e6a73"/><circle cx="516.8" cy="350.5" r="4.2" fill="url(#sh)" stroke="#01121c" stroke-opacity=".42" stroke-width=".8"/><circle cx="505.0" cy="358.3" r="4.6" fill="#2c9e5b"/><circle cx="505.0" cy="358.3" r="4.2" fill="url(#sh)" stroke="#01121c" stroke-opacity=".42" stroke-width=".8"/><circle cx="513.2" cy="358.3" r="4.6" fill="#1f5f75"/><circle cx="513.2" cy="358.3" r="4.2" fill="url(#sh)" stroke="#01121c" stroke-opacity=".42" stroke-width=".8"/><circle cx="506.9" cy="353.4" r="4.6" fill="#dac51d"/><circle cx="506.9" cy="353.4" r="4.2" fill="url(#sh)" stroke="#01121c" stroke-opacity=".42" stroke-width=".8"/><circle cx="496.4" cy="356.8" r="4.6" fill="#1e6a73"/><circle cx="496.4" cy="356.8" r="4.2" fill="url(#sh)" stroke="#01121c" stroke-opacity=".42" stroke-width=".8"/><circle cx="477.3" cy="360.7" r="4.6" fill="#1e6a73"/><circle cx="477.3" cy="360.7" r="4.2" fill="url(#sh)" stroke="#01121c" stroke-opacity=".42" stroke-width=".8"/><circle cx="479.7" cy="356.3" r="4.6" fill="#225674"/><circle cx="479.7" cy="356.3" r="4.2" fill="url(#sh)" stroke="#01121c" stroke-opacity=".42" stroke-width=".8"/><circle cx="482.1" cy="351.9" r="4.6" fill="#1f5f75"/><circle cx="482.1" cy="351.9" r="4.2" fill="url(#sh)" stroke="#01121c" stroke-opacity=".42" stroke-width=".8"/><circle cx="484.6" cy="368.4" r="4.6" fill="#1e6a73"/><circle cx="484.6" cy="368.4" r="4.2" fill="url(#sh)" stroke="#01121c" stroke-opacity=".42" stroke-width=".8"/><circle cx="489.4" cy="376.7" r="4.6" fill="#1e6a73"/><circle cx="489.4" cy="376.7" r="4.2" fill="url(#sh)" stroke="#01121c" stroke-opacity=".42" stroke-width=".8"/><circle cx="491.4" cy="372.3" r="4.6" fill="#1e8a70"/><circle cx="491.4" cy="372.3" r="4.2" fill="url(#sh)" stroke="#01121c" stroke-opacity=".42" stroke-width=".8"/><circle cx="473.9" cy="370.9" r="4.6" fill="#225674"/><circle cx="473.9" cy="370.9" r="4.2" fill="url(#sh)" stroke="#01121c" stroke-opacity=".42" stroke-width=".8"/><circle cx="471.0" cy="380.6" r="4.6" fill="#dac51d"/><circle cx="471.0" cy="380.6" r="4.2" fill="url(#sh)" stroke="#01121c" stroke-opacity=".42" stroke-width=".8"/><circle cx="471.9" cy="377.7" r="4.6" fill="#2c9e5b"/><circle cx="471.9" cy="377.7" r="4.2" fill="url(#sh)" stroke="#01121c" stroke-opacity=".42" stroke-width=".8"/><circle cx="479.2" cy="380.1" r="4.6" fill="#2c9e5b"/><circle cx="479.2" cy="380.1" r="4.2" fill="url(#sh)" stroke="#01121c" stroke-opacity=".42" stroke-width=".8"/><circle cx="481.7" cy="375.2" r="4.6" fill="#225674"/><circle cx="481.7" cy="375.2" r="4.2" fill="url(#sh)" stroke="#01121c" stroke-opacity=".42" stroke-width=".8"/><circle cx="505.0" cy="378.2" r="4.6" fill="#2c9e5b"/><circle cx="505.0" cy="378.2" r="4.2" fill="url(#sh)" stroke="#01121c" stroke-opacity=".42" stroke-width=".8"/><circle cx="506.9" cy="375.2" r="4.6" fill="#1e6a73"/><circle cx="506.9" cy="375.2" r="4.2" fill="url(#sh)" stroke="#01121c" stroke-opacity=".42" stroke-width=".8"/><circle cx="515.1" cy="375.2" r="4.6" fill="#225674"/><circle cx="515.1" cy="375.2" r="4.2" fill="url(#sh)" stroke="#01121c" stroke-opacity=".42" stroke-width=".8"/><circle cx="500.9" cy="369.4" r="4.6" fill="#225674"/><circle cx="500.9" cy="369.4" r="4.2" fill="url(#sh)" stroke="#01121c" stroke-opacity=".42" stroke-width=".8"/><circle cx="509.3" cy="370.1" r="4.6" fill="#1e6a73"/><circle cx="509.3" cy="370.1" r="4.2" fill="url(#sh)" stroke="#01121c" stroke-opacity=".42" stroke-width=".8"/><circle cx="517.6" cy="370.7" r="4.6" fill="#1e6a73"/><circle cx="517.6" cy="370.7" r="4.2" fill="url(#sh)" stroke="#01121c" stroke-opacity=".42" stroke-width=".8"/><circle cx="523.6" cy="379.6" r="4.6" fill="#1f5f75"/><circle cx="523.6" cy="379.6" r="4.2" fill="url(#sh)" stroke="#01121c" stroke-opacity=".42" stroke-width=".8"/><circle cx="490.9" cy="393.2" r="4.6" fill="#1e6a73"/><circle cx="490.9" cy="393.2" r="4.2" fill="url(#sh)" stroke="#01121c" stroke-opacity=".42" stroke-width=".8"/><circle cx="499.1" cy="394.7" r="4.6" fill="#1e6a73"/><circle cx="499.1" cy="394.7" r="4.2" fill="url(#sh)" stroke="#01121c" stroke-opacity=".42" stroke-width=".8"/><circle cx="493.3" cy="388.8" r="4.6" fill="#2b4277"/><circle cx="493.3" cy="388.8" r="4.2" fill="url(#sh)" stroke="#01121c" stroke-opacity=".42" stroke-width=".8"/><circle cx="501.6" cy="389.8" r="4.6" fill="#1e6a73"/><circle cx="501.6" cy="389.8" r="4.2" fill="url(#sh)" stroke="#01121c" stroke-opacity=".42" stroke-width=".8"/><circle cx="508.3" cy="393.7" r="4.6" fill="#2c9e5b"/><circle cx="508.3" cy="393.7" r="4.2" fill="url(#sh)" stroke="#01121c" stroke-opacity=".42" stroke-width=".8"/><circle cx="518.1" cy="390.8" r="4.6" fill="#1e6a73"/><circle cx="518.1" cy="390.8" r="4.2" fill="url(#sh)" stroke="#01121c" stroke-opacity=".42" stroke-width=".8"/><circle cx="418.3" cy="402.6" r="4.6" fill="#1f5f75"/><circle cx="418.3" cy="402.6" r="4.2" fill="url(#sh)" stroke="#01121c" stroke-opacity=".42" stroke-width=".8"/><circle cx="408.5" cy="405.0" r="4.6" fill="#1f5f75"/><circle cx="408.5" cy="405.0" r="4.2" fill="url(#sh)" stroke="#01121c" stroke-opacity=".42" stroke-width=".8"/><circle cx="398.3" cy="407.5" r="4.6" fill="#1e6a73"/><circle cx="398.3" cy="407.5" r="4.2" fill="url(#sh)" stroke="#01121c" stroke-opacity=".42" stroke-width=".8"/><circle cx="379.9" cy="415.4" r="4.6" fill="#1e6a73"/><circle cx="379.9" cy="415.4" r="4.2" fill="url(#sh)" stroke="#01121c" stroke-opacity=".42" stroke-width=".8"/><circle cx="400.6" cy="424.0" r="4.6" fill="#1e6a73"/><circle cx="400.6" cy="424.0" r="4.2" fill="url(#sh)" stroke="#01121c" stroke-opacity=".42" stroke-width=".8"/><circle cx="418.7" cy="422.5" r="4.6" fill="#1e6a73"/><circle cx="418.7" cy="422.5" r="4.2" fill="url(#sh)" stroke="#01121c" stroke-opacity=".42" stroke-width=".8"/><circle cx="420.7" cy="418.6" r="4.6" fill="#1f5f75"/><circle cx="420.7" cy="418.6" r="4.2" fill="url(#sh)" stroke="#01121c" stroke-opacity=".42" stroke-width=".8"/><circle cx="430.7" cy="415.4" r="4.6" fill="#1f5f75"/><circle cx="430.7" cy="415.4" r="4.2" fill="url(#sh)" stroke="#01121c" stroke-opacity=".42" stroke-width=".8"/><circle cx="441.1" cy="412.3" r="4.6" fill="#2b4277"/><circle cx="441.1" cy="412.3" r="4.2" fill="url(#sh)" stroke="#01121c" stroke-opacity=".42" stroke-width=".8"/><circle cx="455.6" cy="417.7" r="4.6" fill="#1e6a73"/><circle cx="455.6" cy="417.7" r="4.2" fill="url(#sh)" stroke="#01121c" stroke-opacity=".42" stroke-width=".8"/><circle cx="449.3" cy="412.8" r="4.6" fill="#1e6a73"/><circle cx="449.3" cy="412.8" r="4.2" fill="url(#sh)" stroke="#01121c" stroke-opacity=".42" stroke-width=".8"/><circle cx="457.6" cy="413.8" r="4.6" fill="#1f5f75"/><circle cx="457.6" cy="413.8" r="4.2" fill="url(#sh)" stroke="#01121c" stroke-opacity=".42" stroke-width=".8"/><circle cx="473.6" cy="416.7" r="4.6" fill="#6db637"/><circle cx="473.6" cy="416.7" r="4.2" fill="url(#sh)" stroke="#01121c" stroke-opacity=".42" stroke-width=".8"/><circle cx="467.3" cy="410.9" r="4.6" fill="#1f5f75"/><circle cx="467.3" cy="410.9" r="4.2" fill="url(#sh)" stroke="#01121c" stroke-opacity=".42" stroke-width=".8"/><circle cx="476.0" cy="411.4" r="4.6" fill="#1e7c78"/><circle cx="476.0" cy="411.4" r="4.2" fill="url(#sh)" stroke="#01121c" stroke-opacity=".42" stroke-width=".8"/><circle cx="465.3" cy="419.1" r="4.6" fill="#1f5f75"/><circle cx="465.3" cy="419.1" r="4.2" fill="url(#sh)" stroke="#01121c" stroke-opacity=".42" stroke-width=".8"/><circle cx="467.8" cy="431.7" r="4.6" fill="#1e6a73"/><circle cx="467.8" cy="431.7" r="4.2" fill="url(#sh)" stroke="#01121c" stroke-opacity=".42" stroke-width=".8"/><circle cx="469.7" cy="427.4" r="4.6" fill="#2b4277"/><circle cx="469.7" cy="427.4" r="4.2" fill="url(#sh)" stroke="#01121c" stroke-opacity=".42" stroke-width=".8"/><circle cx="457.6" cy="433.7" r="4.6" fill="#225674"/><circle cx="457.6" cy="433.7" r="4.2" fill="url(#sh)" stroke="#01121c" stroke-opacity=".42" stroke-width=".8"/><circle cx="460.0" cy="430.3" r="4.6" fill="#225674"/><circle cx="460.0" cy="430.3" r="4.2" fill="url(#sh)" stroke="#01121c" stroke-opacity=".42" stroke-width=".8"/><circle cx="449.3" cy="438.3" r="4.6" fill="#1e6a73"/><circle cx="449.3" cy="438.3" r="4.2" fill="url(#sh)" stroke="#01121c" stroke-opacity=".42" stroke-width=".8"/><circle cx="431.8" cy="435.1" r="4.6" fill="#1f5f75"/><circle cx="431.8" cy="435.1" r="4.2" fill="url(#sh)" stroke="#01121c" stroke-opacity=".42" stroke-width=".8"/><circle cx="439.6" cy="436.1" r="4.6" fill="#1e6a73"/><circle cx="439.6" cy="436.1" r="4.2" fill="url(#sh)" stroke="#01121c" stroke-opacity=".42" stroke-width=".8"/><circle cx="431.7" cy="441.0" r="4.6" fill="#1e8a70"/><circle cx="431.7" cy="441.0" r="4.2" fill="url(#sh)" stroke="#01121c" stroke-opacity=".42" stroke-width=".8"/><circle cx="421.4" cy="438.5" r="4.6" fill="#1e9566"/><circle cx="421.4" cy="438.5" r="4.2" fill="url(#sh)" stroke="#01121c" stroke-opacity=".42" stroke-width=".8"/><circle cx="402.9" cy="441.3" r="4.6" fill="#1f5f75"/><circle cx="402.9" cy="441.3" r="4.2" fill="url(#sh)" stroke="#01121c" stroke-opacity=".42" stroke-width=".8"/><circle cx="415.5" cy="459.4" r="4.6" fill="#225674"/><circle cx="415.5" cy="459.4" r="4.2" fill="url(#sh)" stroke="#01121c" stroke-opacity=".42" stroke-width=".8"/><circle cx="434.0" cy="457.0" r="4.6" fill="#1e9566"/><circle cx="434.0" cy="457.0" r="4.2" fill="url(#sh)" stroke="#01121c" stroke-opacity=".42" stroke-width=".8"/><circle cx="450.3" cy="453.6" r="4.6" fill="#1e8a70"/><circle cx="450.3" cy="453.6" r="4.2" fill="url(#sh)" stroke="#01121c" stroke-opacity=".42" stroke-width=".8"/><circle cx="460.0" cy="450.7" r="4.6" fill="#1e6a73"/><circle cx="460.0" cy="450.7" r="4.2" fill="url(#sh)" stroke="#01121c" stroke-opacity=".42" stroke-width=".8"/><circle cx="462.4" cy="446.8" r="4.6" fill="#225674"/><circle cx="462.4" cy="446.8" r="4.2" fill="url(#sh)" stroke="#01121c" stroke-opacity=".42" stroke-width=".8"/><circle cx="477.5" cy="449.2" r="4.6" fill="#2c9e5b"/><circle cx="477.5" cy="449.2" r="4.2" fill="url(#sh)" stroke="#01121c" stroke-opacity=".42" stroke-width=".8"/><circle cx="469.2" cy="450.2" r="4.6" fill="#1e6a73"/><circle cx="469.2" cy="450.2" r="4.2" fill="url(#sh)" stroke="#01121c" stroke-opacity=".42" stroke-width=".8"/><circle cx="472.6" cy="443.9" r="4.6" fill="#2b4277"/><circle cx="472.6" cy="443.9" r="4.2" fill="url(#sh)" stroke="#01121c" stroke-opacity=".42" stroke-width=".8"/><circle cx="480.7" cy="443.9" r="4.6" fill="#1e6a73"/><circle cx="480.7" cy="443.9" r="4.2" fill="url(#sh)" stroke="#01121c" stroke-opacity=".42" stroke-width=".8"/><circle cx="462.7" cy="467.2" r="4.6" fill="#1e6a73"/><circle cx="462.7" cy="467.2" r="4.2" fill="url(#sh)" stroke="#01121c" stroke-opacity=".42" stroke-width=".8"/><circle cx="452.2" cy="469.6" r="4.6" fill="#1e6a73"/><circle cx="452.2" cy="469.6" r="4.2" fill="url(#sh)" stroke="#01121c" stroke-opacity=".42" stroke-width=".8"/><circle cx="491.4" cy="413.8" r="4.6" fill="#1e6a73"/><circle cx="491.4" cy="413.8" r="4.2" fill="url(#sh)" stroke="#01121c" stroke-opacity=".42" stroke-width=".8"/><circle cx="493.8" cy="408.4" r="4.6" fill="#1e6a73"/><circle cx="493.8" cy="408.4" r="4.2" fill="url(#sh)" stroke="#01121c" stroke-opacity=".42" stroke-width=".8"/><circle cx="503.8" cy="406.0" r="4.6" fill="#1e6a73"/><circle cx="503.8" cy="406.0" r="4.2" fill="url(#sh)" stroke="#01121c" stroke-opacity=".42" stroke-width=".8"/><circle cx="502.0" cy="414.8" r="4.6" fill="#1f5f75"/><circle cx="502.0" cy="414.8" r="4.2" fill="url(#sh)" stroke="#01121c" stroke-opacity=".42" stroke-width=".8"/><circle cx="512.2" cy="406.7" r="4.6" fill="#1f5f75"/><circle cx="512.2" cy="406.7" r="4.2" fill="url(#sh)" stroke="#01121c" stroke-opacity=".42" stroke-width=".8"/><circle cx="520.5" cy="407.3" r="4.6" fill="#1e6a73"/><circle cx="520.5" cy="407.3" r="4.2" fill="url(#sh)" stroke="#01121c" stroke-opacity=".42" stroke-width=".8"/><circle cx="522.6" cy="428.8" r="4.6" fill="#1e8a70"/><circle cx="522.6" cy="428.8" r="4.2" fill="url(#sh)" stroke="#01121c" stroke-opacity=".42" stroke-width=".8"/><circle cx="525.3" cy="445.5" r="4.6" fill="#1e8a70"/><circle cx="525.3" cy="445.5" r="4.2" fill="url(#sh)" stroke="#01121c" stroke-opacity=".42" stroke-width=".8"/></g><g fill="none" stroke="#000" stroke-width="1"><line x1="452.8" y1="227.5" x2="481.3" y2="400.4" stroke-opacity="0.5"/><line x1="452.8" y1="227.5" x2="481.3" y2="400.4" stroke-opacity="0.75" stroke-dasharray="5 4"/><line x1="481.3" y1="400.4" x2="607" y2="387.6" stroke-opacity="0.5"/><line x1="481.3" y1="400.4" x2="607" y2="387.6" stroke-opacity="0.75" stroke-dasharray="12 9"/></g><g fill="none" stroke-linecap="round"><line x1="110" y1="607.2" x2="109.8" y2="616.5" stroke="#1e6fe0" stroke-width="1.6"/><path d="M107.9 615.6 L109.6 613.6 L109.6 617.2 Z" fill="#1414ff" stroke="none"/><line x1="110" y1="607.2" x2="133.5" y2="604.2" stroke="#ff7f50" stroke-width="1.4"/><path d="M136 603.8 L132.2 602.4 L132.6 606 Z" fill="#ff6a45" stroke="none"/><line x1="110" y1="607.2" x2="113.2" y2="628.5" stroke="#2ecc71" stroke-width="1.8"/><path d="M113.6 631.2 L111.2 627.4 L115 626.8 Z" fill="#2ecc71" stroke="none"/></g><g font-family="'DejaVu Sans', 'Liberation Sans', sans-serif" font-style="italic" font-weight="bold" font-size="9.5" fill="#000"><text x="134.6" y="600">a<tspan dy="-3" font-size="7">*</tspan></text><text x="113.8" y="610.8">c<tspan dy="-3" font-size="7">*</tspan></text><text x="115.4" y="621.8">b<tspan dy="-3" font-size="7">*</tspan></text></g></svg></div>
<div class="tab sel" style="left:23px;top:660px;width:123px;height:26px"></div>
<div class="t fit" style="left:27px;top:660px;height:23px;line-height:23px;letter-spacing:0.094px;">Lattice Parameters</div>
<div class="tab" style="left:148px;top:662px;width:127px;height:22px"></div>
<div class="t fit" style="left:152px;top:662px;height:22px;line-height:22px;letter-spacing:0.247px;">Sample Orientation</div>
<div class="t fit" style="left:39px;top:699px;height:26px;line-height:26px;">a:</div>
<div class="inp" style="left:63px;top:699px;width:244px;height:24px;"></div>
<div class="t fit" style="left:70px;top:699px;height:26px;line-height:26px;">18.31864</div>
<div class="t fit" style="left:320px;top:699px;height:26px;line-height:26px;">b:</div>
<div class="inp" style="left:344px;top:699px;width:244px;height:24px;"></div>
<div class="t fit" style="left:351px;top:699px;height:26px;line-height:26px;">18.65285</div>
<div class="t fit" style="left:601px;top:699px;height:26px;line-height:26px;">c:</div>
<div class="inp" style="left:624px;top:699px;width:244px;height:24px;"></div>
<div class="t fit" style="left:631px;top:699px;height:26px;line-height:26px;">6.54740</div>
<div class="t fit" style="left:39px;top:731px;height:26px;line-height:26px;">α:</div>
<div class="inp" style="left:63px;top:731px;width:244px;height:24px;"></div>
<div class="t fit" style="left:70px;top:731px;height:26px;line-height:26px;">90.000</div>
<div class="t fit" style="left:320px;top:731px;height:26px;line-height:26px;">β:</div>
<div class="inp" style="left:344px;top:731px;width:244px;height:24px;"></div>
<div class="t fit" style="left:351px;top:731px;height:26px;line-height:26px;">90.000</div>
<div class="t fit" style="left:601px;top:731px;height:26px;line-height:26px;">γ:</div>
<div class="inp" style="left:624px;top:731px;width:244px;height:24px;"></div>
<div class="t fit" style="left:631px;top:731px;height:26px;line-height:26px;">90.000</div>
<div class="t fit" style="left:881px;top:699px;height:26px;line-height:26px;font-size:12.5px;">Å</div>
<div class="t fit" style="left:881px;top:731px;height:26px;line-height:26px;font-size:12.5px;">°</div>
<pre class="con" style="left:27.5px;top:781px">BinMD successful, Duration 0.04 seconds
DeleteWorkspace started (child)
DeleteWorkspace successful, Duration 0.00 seconds
ConvertQtoHKLMDHisto successful, Duration 0.48 seconds
CompactMD started
Rounding min from: -9.36139 to the nearest whole width at: -9.36145
Rounding max from: 6.66112 to the nearest whole width at: 6.71084
Rounding min from: -1.17867 to the nearest whole width at: -1.17871
Rounding max from: 9.85683 to the nearest whole width at: 9.9067
CompactMD successful, Duration 0.06 seconds</pre>
<div class="uarr" style="left:894px;top:788px"></div>
<div class="sbt" style="left:893px;top:797px;width:10px;height:152px;"></div>
<div class="sbh" style="left:894.3px;top:940px"></div>
<div class="darr2" style="left:894px;top:955px"></div>
<div class="bar" style="left:21px;top:976px;width:889px;height:33px;"></div>
<div class="t fit" style="left:27px;top:977px;height:32px;line-height:32px;letter-spacing:0.163px;">Complete!</div>
<div class="prog" style="left:458px;top:980px;width:432px;height:26px;"></div>
<div class="t fit" style="left:658px;top:980px;height:26px;line-height:26px;letter-spacing:0.180px;">Done</div>
<svg class="ic" style="left:898px;top:997px;width:12px;height:12px" viewBox="0 0 12 12"><path d="M1 11.8L11.8 1M4.5 11.8L11.8 4.5M8 11.8L11.8 8" stroke="#3c414b" stroke-width="1.1" fill="none"/></svg>
<div class="tab sel" style="left:918px;top:53px;width:79px;height:26px"></div>
<div class="t fit" style="left:922px;top:53px;height:23px;line-height:23px;letter-spacing:0.122px;">Parameters</div>
<div class="tab" style="left:999px;top:55px;width:44px;height:22px"></div>
<div class="t fit" style="left:1003px;top:55px;height:22px;line-height:22px;letter-spacing:-0.306px;">Peaks</div>
<div class="tab" style="left:1045px;top:55px;width:43px;height:22px"></div>
<div class="t fit" style="left:1049px;top:55px;height:22px;line-height:22px;letter-spacing:-0.156px;">Views</div>
<div class="tab" style="left:1090px;top:55px;width:79px;height:22px"></div>
<div class="t fit" style="left:1094px;top:55px;height:22px;line-height:22px;letter-spacing:0.495px;">Modulation</div>
<div class="tab sel" style="left:931px;top:92px;width:88px;height:25px"></div>
<div class="t fit" style="left:935px;top:92px;height:22px;line-height:22px;letter-spacing:0.059px;">Convert To Q</div>
<div class="inp" style="left:942px;top:130px;width:118px;height:27px;"></div>
<div class="sep" style="left:1048px;top:131px;height:27px"></div>
<div class="darr" style="left:1050.6px;top:141.8px"></div>
<svg class="ic" style="left:947.5px;top:137px;width:14px;height:15px" viewBox="0 0 512 512" preserveAspectRatio="none"><path fill="#000" d="M256 192l-39.500-39.500c4.900-12.600 7.500-26.200 7.500-40.500C224 50.100 173.900 0 112 0S0 50.100 0 112s50.100 112 112 112c14.300 0 27.900-2.700 40.500-7.500L192 256l-39.500 39.500c-12.600-4.900-26.200-7.500-40.500-7.500C50.100 288 0 338.100 0 400s50.100 112 112 112s112-50.100 112-112c0-14.300-2.700-27.900-7.500-40.500L499.200 76.800c7.100-7.100 7.100-18.500 0-25.600c-28.300-28.300-74.100-28.300-102.400 0L256 192zm22.600 150.600L396.800 460.800c28.300 28.300 74.100 28.300 102.400 0c7.100-7.100 7.100-18.500 0-25.600L342.600 278.600l-64 64zM64 112a48 48 0 1 1 96 0 48 48 0 1 1 -96 0zm48 240a48 48 0 1 1 0 96 48 48 0 1 1 0-96z"/></svg>
<div class="t fit" style="left:969px;top:130px;height:29px;line-height:29px;font-size:12.2px;letter-spacing:-0.022px;">CORELLI</div>
<div class="t fit" style="left:1073px;top:132px;height:26px;line-height:26px;letter-spacing:-0.553px;">IPTS:</div>
<div class="inp" style="left:1116px;top:131px;width:251px;height:24px;"></div>
<div class="t fit" style="left:1123px;top:131px;height:26px;line-height:26px;letter-spacing:0.091px;">31429</div>
<div class="t fit" style="left:1380px;top:132px;height:26px;line-height:26px;letter-spacing:0.270px;">Experiment:</div>
<div class="inp" style="left:1466px;top:131px;width:251px;height:24px;"></div>
<div class="t fit" style="left:947px;top:165px;height:26px;line-height:26px;letter-spacing:-0.056px;">Runs:</div>
<div class="inp" style="left:993px;top:165px;width:724px;height:24px;"></div>
<div class="t fit" style="left:1000px;top:165px;height:26px;line-height:26px;letter-spacing:0.156px;">383673</div>
<div class="inp" style="left:942px;top:197px;width:670px;height:24px;"></div>
<div class="t fit" style="left:949px;top:197px;height:26px;line-height:26px;letter-spacing:0.072px;">/SNS/CORELLI/shared/calibration/2022A/calibration.xml</div>
<div class="inp" style="left:942px;top:229px;width:670px;height:24px;"></div>
<div class="inp" style="left:942px;top:261px;width:670px;height:24px;"></div>
<div class="btn" style="left:1620px;top:199px;width:99px;height:22px;"></div>
<svg class="ic" style="left:1632px;top:203.75px;width:16.1px;height:12.5px" viewBox="0 32 576 448" preserveAspectRatio="none"><path fill="#000" d="M88.700 223.800L0 375.800V96C0 60.700 28.700 32 64 32H181.500c17 0 33.300 6.700 45.300 18.700l26.500 26.500c12 12 28.300 18.700 45.300 18.700H416c35.300 0 64 28.700 64 64v32H144c-22.800 0-43.800 12.100-55.300 31.800zm27.600 16.100C122.100 230 132.600 224 144 224H544c11.500 0 22 6.100 27.700 16.100s5.700 22.200-.1 32.100l-112 192C453.900 474 443.400 480 432 480H32c-11.500 0-22-6.100-27.700-16.100s-5.700-22.200 .1-32.100l112-192z"/></svg>
<div class="t fit" style="left:1650px;top:199px;height:22px;line-height:22px;letter-spacing:0.371px;">Detector</div>
<div class="btn" style="left:1620px;top:231px;width:99px;height:22px;"></div>
<svg class="ic" style="left:1622px;top:235.75px;width:16.1px;height:12.5px" viewBox="0 32 576 448" preserveAspectRatio="none"><path fill="#000" d="M88.700 223.800L0 375.800V96C0 60.700 28.700 32 64 32H181.500c17 0 33.300 6.700 45.300 18.700l26.500 26.500c12 12 28.300 18.700 45.300 18.700H416c35.300 0 64 28.700 64 64v32H144c-22.800 0-43.800 12.100-55.300 31.800zm27.600 16.100C122.100 230 132.600 224 144 224H544c11.500 0 22 6.100 27.700 16.100s5.700 22.200-.1 32.100l-112 192C453.900 474 443.400 480 432 480H32c-11.500 0-22-6.100-27.700-16.100s-5.700-22.200 .1-32.100l112-192z"/></svg>
<div class="t fit" style="left:1640px;top:231px;height:22px;line-height:22px;letter-spacing:0.345px;">Goniometer</div>
<div class="btn" style="left:1620px;top:263px;width:99px;height:22px;"></div>
<svg class="ic" style="left:1644px;top:267.75px;width:16.1px;height:12.5px" viewBox="0 32 576 448" preserveAspectRatio="none"><path fill="#bbbdc2" d="M88.700 223.800L0 375.800V96C0 60.700 28.700 32 64 32H181.500c17 0 33.300 6.700 45.300 18.700l26.500 26.500c12 12 28.300 18.700 45.300 18.700H416c35.300 0 64 28.700 64 64v32H144c-22.800 0-43.800 12.100-55.300 31.800zm27.600 16.100C122.100 230 132.600 224 144 224H544c11.500 0 22 6.100 27.700 16.100s5.700 22.200-.1 32.100l-112 192C453.900 474 443.400 480 432 480H32c-11.500 0-22-6.100-27.700-16.100s-5.700-22.200 .1-32.100l112-192z"/></svg>
<div class="t fit" style="left:1662px;top:263px;height:22px;line-height:22px;color:#a9b1c1;letter-spacing:-0.070px;">Tube</div>
<div class="btn" style="left:942px;top:297px;width:73px;height:22px;"></div>
<svg class="ic" style="left:946px;top:301.2px;width:11.9px;height:13.6px" viewBox="0 0 448 512" preserveAspectRatio="none"><path fill="#000" d="M438.600 150.600c12.500-12.500 12.500-32.800 0-45.300l-96-96c-12.500-12.500-32.800-12.500-45.300 0s-12.500 32.800 0 45.300L338.700 96 32 96C14.300 96 0 110.300 0 128s14.300 32 32 32l306.700 0-41.400 41.400c-12.500 12.500-12.500 32.800 0 45.300s32.800 12.500 45.300 0l96-96zm-333.300 352c12.500 12.500 32.800 12.500 45.300 0s12.500-32.800 0-45.300L109.300 416 416 416c17.700 0 32-14.300 32-32s-14.300-32-32-32l-306.700 0 41.400-41.400c12.500-12.500 12.500-32.800 0-45.300s-32.800-12.500-45.300 0l-96 96c-12.500 12.500-12.500 32.800 0 45.300l96 96z"/></svg>
<div class="t fit" style="left:962px;top:297px;height:22px;line-height:22px;letter-spacing:0.246px;">Convert</div>
<div class="cb" style="left:1024px;top:302px"><svg viewBox="0 0 12 12" width="12" height="12"><path d="M3.3 5.9 L5.2 8.6 L8.8 3.1" fill="none" stroke="#1f2530" stroke-width="1.7" stroke-linecap="round" stroke-linejoin="round"/></svg></div>
<div class="t fit" style="left:1041px;top:298px;height:22px;line-height:22px;letter-spacing:0.163px;">Lorentz Correction</div>
<div class="t fit" style="left:1167px;top:297px;height:22px;line-height:22px;letter-spacing:0.016px;">Time Stop [s]:</div>
<div class="inp" style="left:1262px;top:295px;width:62px;height:24px;"></div>
<div class="t fit" style="left:1337px;top:297px;height:22px;line-height:22px;letter-spacing:0.141px;">d(min):</div>
<div class="inp" style="left:1392px;top:295px;width:61px;height:24px;"></div>
<div class="t fit" style="left:1399px;top:295px;height:26px;line-height:26px;letter-spacing:0.073px;">0.7</div>
<div class="t fit" style="left:1466px;top:297px;height:22px;line-height:22px;letter-spacing:0.242px;">λ:</div>
<div class="inp" style="left:1489px;top:295px;width:96px;height:24px;"></div>
<div class="t fit" style="left:1496px;top:295px;height:26px;line-height:26px;letter-spacing:0.073px;">0.6</div>
<div class="inp" style="left:1593px;top:295px;width:97px;height:24px;"></div>
<div class="t fit" style="left:1600px;top:295px;height:26px;line-height:26px;letter-spacing:0.073px;">2.5</div>
<div class="t fit" style="left:1703px;top:297px;height:22px;line-height:22px;font-size:12.5px;">Å</div>
<div class="btn" style="left:1592px;top:341px;width:66px;height:22px;"></div>
<svg class="ic" style="left:1596px;top:346.0px;width:12px;height:12px" viewBox="0 32 448 448" preserveAspectRatio="none"><path fill="#000" d="M64 32C28.700 32 0 60.700 0 96V416c0 35.300 28.700 64 64 64H384c35.300 0 64-28.700 64-64V173.300c0-17-6.700-33.300-18.700-45.300L352 50.700C340 38.700 323.700 32 306.700 32H64zm0 96c0-17.700 14.300-32 32-32H288c17.700 0 32 14.300 32 32v64c0 17.700-14.300 32-32 32H96c-17.700 0-32-14.300-32-32V128zM224 288a64 64 0 1 1 0 128 64 64 0 1 1 0-128z"/></svg>
<div class="t fit" style="left:1612px;top:341px;height:22px;line-height:22px;letter-spacing:-0.505px;">Save Q</div>
<div class="btn" style="left:1664px;top:341px;width:68px;height:22px;"></div>
<svg class="ic" style="left:1666px;top:345.75px;width:16.1px;height:12.5px" viewBox="0 32 576 448" preserveAspectRatio="none"><path fill="#000" d="M88.700 223.800L0 375.800V96C0 60.700 28.700 32 64 32H181.500c17 0 33.300 6.700 45.300 18.700l26.500 26.500c12 12 28.300 18.700 45.300 18.700H416c35.300 0 64 28.700 64 64v32H144c-22.800 0-43.800 12.100-55.300 31.800zm27.600 16.100C122.100 230 132.600 224 144 224H544c11.500 0 22 6.100 27.700 16.100s5.700 22.200-.1 32.100l-112 192C453.900 474 443.400 480 432 480H32c-11.500 0-22-6.100-27.700-16.100s-5.700-22.200 .1-32.100l112-192z"/></svg>
<div class="t fit" style="left:1684px;top:341px;height:22px;line-height:22px;letter-spacing:-0.049px;">Load Q</div>
<div class="tab" style="left:931px;top:371px;width:74px;height:22px"></div>
<div class="t fit" style="left:935px;top:371px;height:22px;line-height:22px;letter-spacing:-0.155px;">Find Peaks</div>
<div class="tab" style="left:1007px;top:371px;width:82px;height:22px"></div>
<div class="t fit" style="left:1011px;top:371px;height:22px;line-height:22px;letter-spacing:-0.027px;">Index Peaks</div>
<div class="tab" style="left:1091px;top:371px;width:90px;height:22px"></div>
<div class="t fit" style="left:1095px;top:371px;height:22px;line-height:22px;letter-spacing:-0.100px;">Predict Peaks</div>
<div class="tab" style="left:1183px;top:371px;width:104px;height:22px"></div>
<div class="t fit" style="left:1187px;top:371px;height:22px;line-height:22px;letter-spacing:0.096px;">Integrate Peaks</div>
<div class="tab sel" style="left:1289px;top:369px;width:78px;height:26px"></div>
<div class="t fit" style="left:1293px;top:369px;height:23px;line-height:23px;letter-spacing:-0.107px;">Filter Peaks</div>
<div class="inp" style="left:942px;top:408px;width:150px;height:27px;"></div>
<div class="sep" style="left:1080px;top:409px;height:27px"></div>
<div class="darr" style="left:1082.6px;top:419.8px"></div>
<div class="dash" style="left:949px;top:419.8px"></div>
<div class="t fit" style="left:969px;top:408px;height:29px;line-height:29px;letter-spacing:0.719px;">I/σ</div>
<div class="inp" style="left:1100px;top:408px;width:77px;height:27px;"></div>
<div class="sep" style="left:1165px;top:409px;height:27px"></div>
<div class="darr" style="left:1167.6px;top:419.8px"></div>
<div class="dash" style="left:1107px;top:419.8px"></div>
<div class="t fit" style="left:1127px;top:408px;height:29px;line-height:29px;letter-spacing:1.109px;">&gt;</div>
<div class="inp" style="left:1185px;top:409px;width:532px;height:24px;"></div>
<div class="t fit" style="left:1192px;top:409px;height:26px;line-height:26px;letter-spacing:-0.016px;">20</div>
<div class="btn" style="left:942px;top:511px;width:56px;height:22px;"></div>
<svg class="ic" style="left:944.7px;top:515.75px;width:14.3px;height:12.5px" viewBox="0 32 512 448" preserveAspectRatio="none"><path fill="#000" d="M3.900 54.900C10.500 40.900 24.500 32 40 32H472c15.500 0 29.500 8.900 36.100 22.900s4.600 30.500-5.200 42.500L320 320.900V448c0 12.100-6.800 23.200-17.700 28.600s-23.800 4.300-33.500-3l-64-48c-8.100-6-12.800-15.500-12.800-25.600V320.900L9 97.300C-.7 85.400-2.800 68.800 3.900 54.900z"/></svg>
<div class="t fit" style="left:962px;top:511px;height:22px;line-height:22px;letter-spacing:0.167px;">Filter</div>
<div class="btn" style="left:1541px;top:552px;width:92px;height:22px;"></div>
<svg class="ic" style="left:1545px;top:557.0px;width:12px;height:12px" viewBox="0 32 448 448" preserveAspectRatio="none"><path fill="#000" d="M64 32C28.700 32 0 60.700 0 96V416c0 35.300 28.700 64 64 64H384c35.300 0 64-28.700 64-64V173.300c0-17-6.700-33.300-18.700-45.300L352 50.700C340 38.700 323.700 32 306.700 32H64zm0 96c0-17.700 14.300-32 32-32H288c17.700 0 32 14.300 32 32v64c0 17.700-14.300 32-32 32H96c-17.700 0-32-14.300-32-32V128zM224 288a64 64 0 1 1 0 128 64 64 0 1 1 0-128z"/></svg>
<div class="t fit" style="left:1561px;top:552px;height:22px;line-height:22px;letter-spacing:-0.405px;">Save Peaks</div>
<div class="btn" style="left:1639px;top:552px;width:93px;height:22px;"></div>
<svg class="ic" style="left:1641px;top:556.75px;width:16.1px;height:12.5px" viewBox="0 32 576 448" preserveAspectRatio="none"><path fill="#000" d="M88.700 223.800L0 375.800V96C0 60.700 28.700 32 64 32H181.500c17 0 33.300 6.700 45.300 18.700l26.500 26.500c12 12 28.300 18.700 45.300 18.700H416c35.300 0 64 28.700 64 64v32H144c-22.800 0-43.800 12.100-55.300 31.800zm27.600 16.100C122.100 230 132.600 224 144 224H544c11.500 0 22 6.100 27.700 16.100s5.700 22.200-.1 32.100l-112 192C453.900 474 443.400 480 432 480H32c-11.500 0-22-6.100-27.700-16.100s-5.700-22.200 .1-32.100l112-192z"/></svg>
<div class="t fit" style="left:1659px;top:552px;height:22px;line-height:22px;letter-spacing:-0.231px;">Load Peaks</div>
<div class="tab" style="left:931px;top:582px;width:86px;height:22px"></div>
<div class="t fit" style="left:935px;top:582px;height:22px;line-height:22px;letter-spacing:-0.066px;">Calculate UB</div>
<div class="tab" style="left:1019px;top:582px;width:93px;height:22px"></div>
<div class="t fit" style="left:1023px;top:582px;height:22px;line-height:22px;letter-spacing:0.124px;">Transform UB</div>
<div class="tab sel" style="left:1114px;top:580px;width:68px;height:26px"></div>
<div class="t fit" style="left:1118px;top:580px;height:23px;line-height:23px;letter-spacing:-0.170px;">Refine UB</div>
<div class="t fit" style="left:947px;top:620px;height:26px;line-height:26px;letter-spacing:0.070px;">Tolerance:</div>
<div class="inp" style="left:1022px;top:620px;width:534px;height:24px;"></div>
<div class="t fit" style="left:1029px;top:620px;height:26px;line-height:26px;letter-spacing:-0.260px;">0.1</div>
<div class="inp" style="left:1564px;top:619px;width:153px;height:27px;"></div>
<div class="sep" style="left:1705px;top:620px;height:27px"></div>
<div class="darr" style="left:1707.6px;top:630.8px"></div>
<div class="dash" style="left:1571px;top:630.8px"></div>
<div class="t fit" style="left:1591px;top:619px;height:29px;line-height:29px;letter-spacing:0.518px;">Orthorhombic</div>
<div class="btn" style="left:942px;top:754px;width:63px;height:22px;"></div>
<svg class="ic" style="left:944.1px;top:757.85px;width:16.1px;height:14.3px" viewBox="0 0 576 512" preserveAspectRatio="none"><path fill="#000" d="M234.700 42.700L197 56.800c-3 1.100-5 4-5 7.200s2 6.100 5 7.200l37.700 14.100L248.800 123c1.100 3 4 5 7.200 5s6.100-2 7.200-5l14.100-37.700L315 71.200c3-1.100 5-4 5-7.200s-2-6.100-5-7.200L277.300 42.700 263.200 5c-1.100-3-4-5-7.200-5s-6.100 2-7.200 5L234.700 42.700zM46.100 395.400c-18.700 18.700-18.700 49.100 0 67.900l34.600 34.600c18.700 18.700 49.100 18.700 67.900 0L529.900 116.500c18.700-18.700 18.700-49.100 0-67.900L495.300 14.100c-18.700-18.700-49.100-18.700-67.900 0L46.100 395.400zM484.600 82.600l-105 105-23.300-23.300 105-105 23.300 23.300zM7.500 117.200C3 118.900 0 123.200 0 128s3 9.100 7.500 10.800L64 160l21.200 56.500c1.700 4.500 6 7.500 10.800 7.500s9.100-3 10.800-7.500L128 160l56.500-21.200c4.500-1.700 7.500-6 7.500-10.800s-3-9.100-7.500-10.800L128 96 106.800 39.500C105.100 35 100.800 32 96 32s-9.100 3-10.800 7.500L64 96 7.500 117.200zm352 256c-4.500 1.700-7.500 6-7.500 10.800s3 9.100 7.500 10.800L416 416l21.200 56.500c1.700 4.500 6 7.500 10.800 7.500s9.100-3 10.800-7.500L480 416l56.500-21.200c4.500-1.700 7.500-6 7.500-10.800s-3-9.100-7.500-10.800L480 352l-21.200-56.500c-1.700-4.500-6-7.500-10.800-7.500s-9.100 3-10.800 7.500L416 352l-56.500 21.200z"/></svg>
<div class="t fit" style="left:962px;top:754px;height:22px;line-height:22px;letter-spacing:-0.005px;">Refine</div>
<div class="btn" style="left:1576px;top:795px;width:74px;height:22px;background:#ffff00;"></div>
<svg class="ic" style="left:1580px;top:800.0px;width:12px;height:12px" viewBox="0 32 448 448" preserveAspectRatio="none"><path fill="#000" d="M64 32C28.700 32 0 60.700 0 96V416c0 35.300 28.700 64 64 64H384c35.300 0 64-28.700 64-64V173.300c0-17-6.700-33.300-18.700-45.300L352 50.700C340 38.700 323.700 32 306.700 32H64zm0 96c0-17.700 14.300-32 32-32H288c17.700 0 32 14.300 32 32v64c0 17.700-14.300 32-32 32H96c-17.700 0-32-14.300-32-32V128zM224 288a64 64 0 1 1 0 128 64 64 0 1 1 0-128z"/></svg>
<div class="t fit" style="left:1596px;top:795px;height:22px;line-height:22px;letter-spacing:-0.469px;">Save UB</div>
<div class="btn" style="left:1656px;top:795px;width:76px;height:22px;"></div>
<svg class="ic" style="left:1658px;top:799.75px;width:16.1px;height:12.5px" viewBox="0 32 576 448" preserveAspectRatio="none"><path fill="#000" d="M88.700 223.800L0 375.800V96C0 60.700 28.700 32 64 32H181.500c17 0 33.300 6.700 45.300 18.700l26.500 26.500c12 12 28.300 18.700 45.300 18.700H416c35.300 0 64 28.700 64 64v32H144c-22.800 0-43.800 12.100-55.300 31.800zm27.600 16.100C122.100 230 132.600 224 144 224H544c11.500 0 22 6.100 27.700 16.100s5.700 22.200-.1 32.100l-112 192C453.900 474 443.400 480 432 480H32c-11.500 0-22-6.100-27.700-16.100s-5.700-22.200 .1-32.100l112-192z"/></svg>
<div class="t fit" style="left:1676px;top:795px;height:22px;line-height:22px;letter-spacing:-0.078px;">Load UB</div>
<div class="tab sel" style="left:931px;top:823px;width:123px;height:26px"></div>
<div class="t fit" style="left:935px;top:823px;height:23px;line-height:23px;letter-spacing:0.094px;">Lattice Parameters</div>
<div class="tab" style="left:1056px;top:825px;width:127px;height:22px"></div>
<div class="t fit" style="left:1060px;top:825px;height:22px;line-height:22px;letter-spacing:0.247px;">Sample Orientation</div>
<div class="tab" style="left:1185px;top:825px;width:153px;height:22px"></div>
<div class="t fit" style="left:1189px;top:825px;height:22px;line-height:22px;letter-spacing:0.258px;">Modulation Parameters</div>
<div class="t fit" style="left:947px;top:862px;height:26px;line-height:26px;">a:</div>
<div class="inp" style="left:971px;top:862px;width:215px;height:24px;"></div>
<div class="t fit" style="left:978px;top:862px;height:26px;line-height:26px;">18.32(1)</div>
<div class="t fit" style="left:1199px;top:862px;height:26px;line-height:26px;">b:</div>
<div class="inp" style="left:1223px;top:862px;width:216px;height:24px;"></div>
<div class="t fit" style="left:1230px;top:862px;height:26px;line-height:26px;">18.65(1)</div>
<div class="t fit" style="left:1452px;top:862px;height:26px;line-height:26px;">c:</div>
<div class="inp" style="left:1475px;top:862px;width:215px;height:24px;"></div>
<div class="t fit" style="left:1482px;top:862px;height:26px;line-height:26px;">6.547(3)</div>
<div class="t fit" style="left:947px;top:894px;height:26px;line-height:26px;">α:</div>
<div class="inp" style="left:971px;top:894px;width:215px;height:24px;"></div>
<div class="t fit" style="left:978px;top:894px;height:26px;line-height:26px;">90.0</div>
<div class="t fit" style="left:1199px;top:894px;height:26px;line-height:26px;">β:</div>
<div class="inp" style="left:1223px;top:894px;width:216px;height:24px;"></div>
<div class="t fit" style="left:1230px;top:894px;height:26px;line-height:26px;">90.0</div>
<div class="t fit" style="left:1452px;top:894px;height:26px;line-height:26px;">γ:</div>
<div class="inp" style="left:1475px;top:894px;width:215px;height:24px;"></div>
<div class="t fit" style="left:1482px;top:894px;height:26px;line-height:26px;">90.0</div>
<div class="t fit" style="left:1703px;top:862px;height:26px;line-height:26px;font-size:12.5px;">Å</div>
<div class="t fit" style="left:1703px;top:894px;height:26px;line-height:26px;font-size:12.5px;">°</div>
<div class="btn" style="left:942px;top:961px;width:44px;height:22px;background:#008000;"></div>
<svg class="ic" style="left:944.1px;top:964.85px;width:16.1px;height:14.3px" viewBox="0 0 576 512" preserveAspectRatio="none"><path fill="#000" d="M0 64C0 28.700 28.700 0 64 0H224V128c0 17.700 14.300 32 32 32H384V285.700l-86.800 86.800c-10.300 10.300-17.500 23.100-21 37.200l-18.700 74.900c-2.300 9.200-1.800 18.800 1.300 27.500H64c-35.300 0-64-28.700-64-64V64zm384 64H256V0L384 128zM549.800 235.700l14.400 14.400c15.600 15.600 15.600 40.900 0 56.600l-29.400 29.400-71-71 29.400-29.400c15.600-15.600 40.900-15.600 56.600 0zM311.900 417L441.100 287.800l71 71L382.900 487.900c-4.100 4.100-9.200 7-14.900 8.400l-60.100 15c-5.500 1.400-11.200-.2-15.200-4.200s-5.600-9.700-4.200-15.200l15-60.100c1.400-5.600 4.300-10.800 8.400-14.900z"/></svg>
<div class="t fit" style="left:962px;top:961px;height:22px;line-height:22px;color:#17362f;letter-spacing:-0.422px;">Set</div>
</body></html>
